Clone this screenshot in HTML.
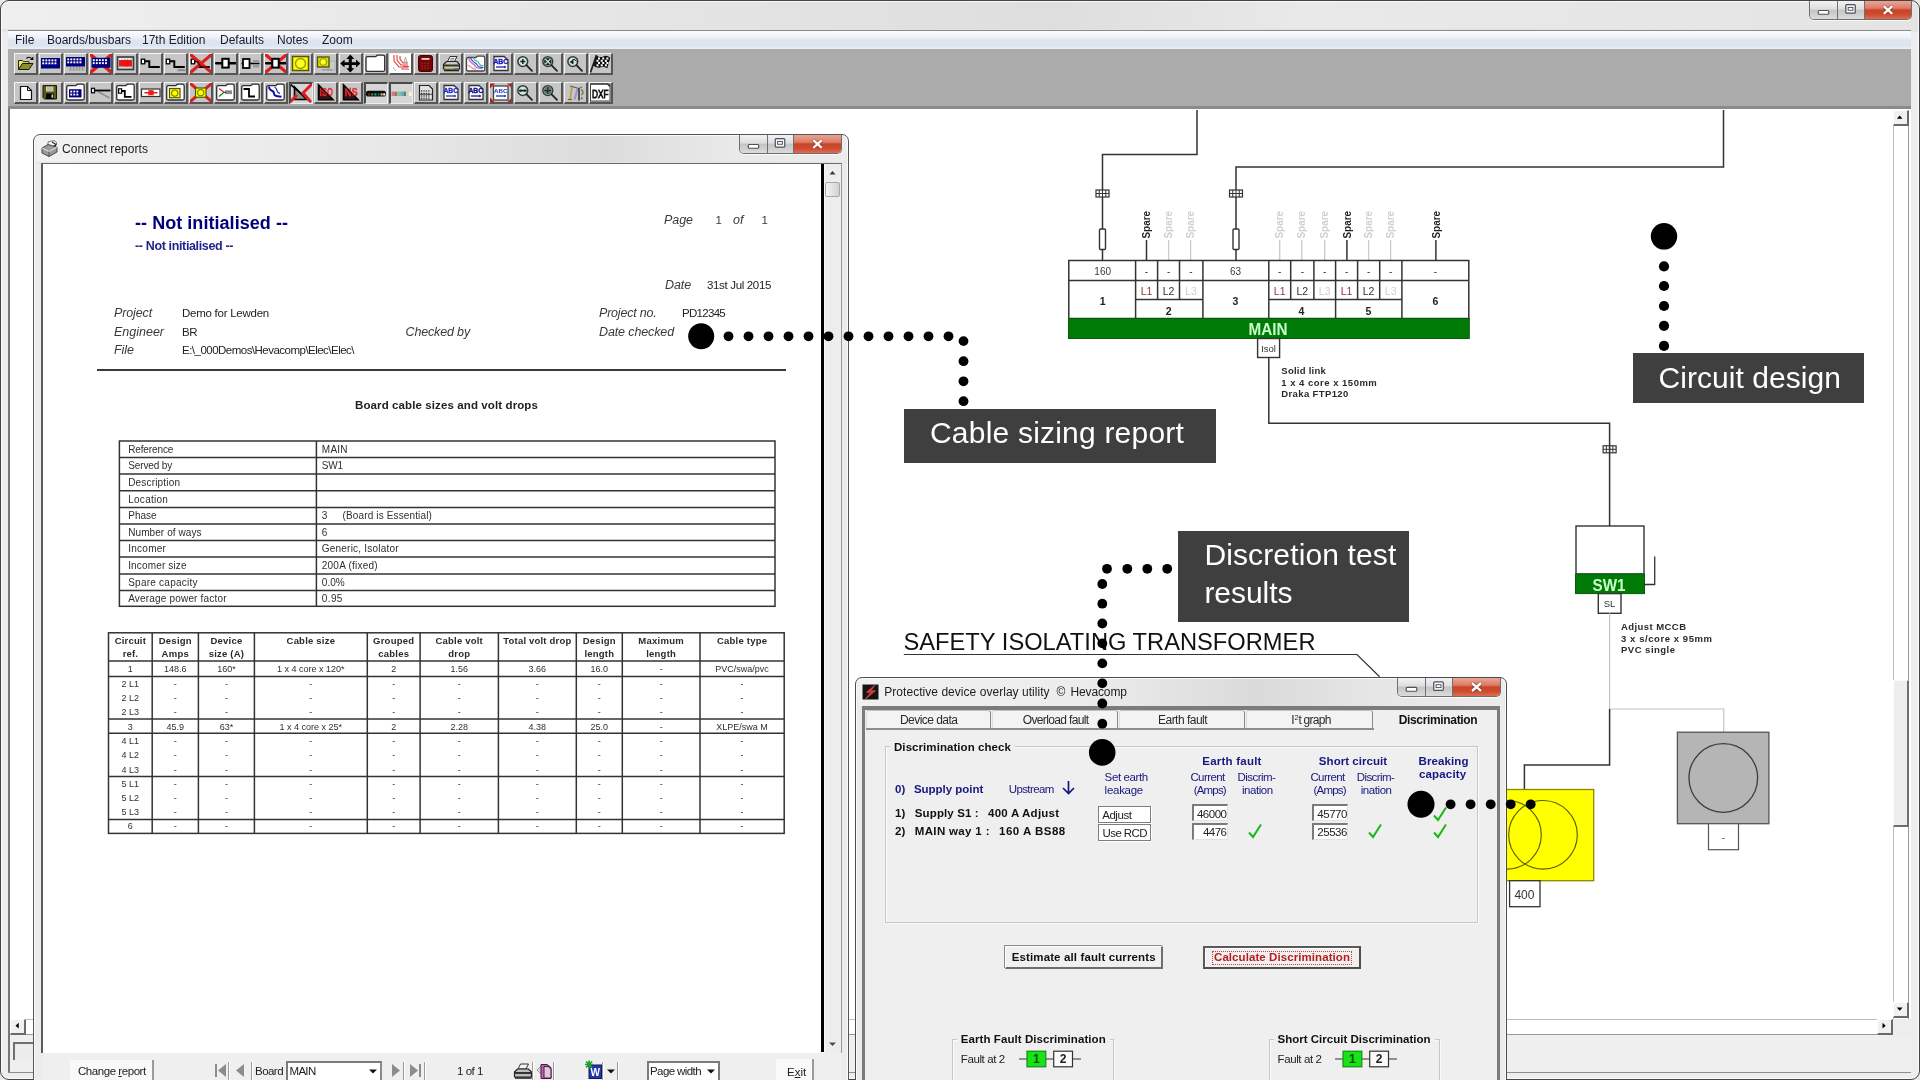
<!DOCTYPE html>
<html>
<head>
<meta charset="utf-8">
<title>Connect</title>
<style>
*{box-sizing:border-box;margin:0;padding:0}
html,body{width:1920px;height:1080px;overflow:hidden;background:#fff;font-family:"Liberation Sans",sans-serif;}
#root{position:absolute;left:0;top:0;width:1920px;height:1080px;overflow:hidden;background:#e9e9e9;will-change:transform;}
.abs{position:absolute}
.t{position:absolute;white-space:nowrap;line-height:1}
/* ===== outer frame ===== */
#frame{position:absolute;left:0;top:0;width:1920px;height:1080px;border-radius:9px 9px 9px 9px;background:linear-gradient(180deg,#ececec 0,#e2e2e2 30px,#ededed 31px,#ededed 100%);border:1px solid #444;box-shadow:inset 0 0 0 1px #fafafa;}
#titlegrad{position:absolute;left:2px;top:2px;width:1916px;height:27px;background:linear-gradient(90deg,#efefef 0,#e6e6e6 30%,#dedede 55%,#e9e9e9 68%,#e4e4e4 100%);border-radius:7px 7px 0 0}
#menubar{position:absolute;left:8px;top:30px;width:1903px;height:19px;background:linear-gradient(180deg,#fbfcfe 0,#eef1f8 35%,#dfe4f1 55%,#dde2ef 80%,#eceff6 100%);border-top:1px solid #8a8a8a}
#menubar span{position:absolute;top:2px;font-size:12px;color:#1b1b2b;white-space:nowrap;line-height:14px}
#toolbar{position:absolute;left:8px;top:49px;width:1903px;height:60px;background:#ababab;border-bottom:3px solid #8b8b8b}
.tb{position:absolute;width:24px;height:22px;background:#c6c6c6;border-top:1px solid #f4f4f4;border-left:1px solid #f4f4f4;border-right:2px solid #555;border-bottom:2px solid #555;overflow:hidden}
.tb svg{position:absolute;left:-1px;top:-1px;width:24px;height:22px}
.tbp{background:#d6d6d6;border-top:2px solid #4a4a4a;border-left:2px solid #4a4a4a;border-right:1px solid #eee;border-bottom:1px solid #eee}
.tbp svg{left:-2px;top:-2px}
/* window controls */
.wc{position:absolute;height:20px;border:1px solid #6f6f6f;border-top:none;border-radius:0 0 5px 5px;overflow:hidden;box-shadow:0 1px 0 rgba(255,255,255,.75)}
.wc div{position:absolute;top:0;height:100%}
.wc .b{background:linear-gradient(180deg,#f2f2f2 0,#dedede 45%,#c4c4c4 50%,#cfcfcf 75%,#dcdcdc 100%);border-right:1px solid #6f6f6f}
.wc .c{background:linear-gradient(180deg,#e9a596 0,#de7b65 40%,#c9442a 50%,#cf4c30 75%,#dd6d52 100%)}
.wc svg{position:absolute;left:0;top:0;width:100%;height:100%}
/* classic scroll buttons */
.sbtn{position:absolute;background:#f1f1f1;border-top:1px solid #fff;border-left:1px solid #fff;border-right:2px solid #6a6a6a;border-bottom:2px solid #6a6a6a}
.sbtn svg{position:absolute;left:0;top:0;width:100%;height:100%}

#canvas{position:absolute;left:8px;top:109px;width:1903px;height:910px;background:#fff;border-left:2px solid #777}
</style>
</head>
<body>
<div id="root">
<div id="frame"></div>
<div id="titlegrad"></div>
<div class="wc" style="left:1809px;top:1px;width:103px;height:19px"><div class="b" style="left:0;width:28px"><svg viewBox="0 0 28 19"><rect x="8.5" y="10.02" width="11" height="4" rx="1" fill="#fff" stroke="#4c5260" stroke-width="1.2"/></svg></div><div class="b" style="left:28px;width:27px"><svg viewBox="0 0 27 19"><rect x="8.0" y="3.8000000000000003" width="10" height="9" rx="1" fill="#f6f6f6" stroke="#4c5260" stroke-width="1.3"/><rect x="10.5" y="6.800000000000001" width="5" height="3" fill="#fff" stroke="#4c5260" stroke-width="1"/></svg></div><div class="c" style="left:55px;width:47px"><svg viewBox="0 0 47 19"><path d="M19.4 6.3L26.6 12.7M26.6 6.3L19.4 12.7" stroke="#5a2218" stroke-width="4" stroke-linecap="round" opacity=".5"/><path d="M19.4 6.3L26.6 12.7M26.6 6.3L19.4 12.7" stroke="#fff" stroke-width="2.4" stroke-linecap="square"/></svg></div></div>
<div id="menubar">
<span style="left:7px">File</span><span style="left:39px">Boards/busbars</span><span style="left:134px">17th Edition</span><span style="left:212px">Defaults</span><span style="left:269px">Notes</span><span style="left:314px">Zoom</span>
</div>
<div id="toolbar">
<div class="tb" style="left:6px;top:4px"><svg viewBox="0 0 24 22"><path d="M4.5 16.5v-9h4l1 1.2h5.5v2.3" fill="#e9e96e" stroke="#2a2a00" stroke-width="1"/><path d="M4.5 16.5l3.8-6h10.7l-4 6z" fill="#8d8d2d" stroke="#1c1c00" stroke-width="1"/><path d="M12.5 5.5q2.6-2.6 5.2 0.2" stroke="#000" stroke-width="1.1" fill="none"/><path d="M19.3 3.4v3.6h-3.4z" fill="#000"/></svg></div>
<div class="tb" style="left:31px;top:4px"><svg viewBox="0 0 24 22"><rect x="2" y="5" width="19" height="10.5" fill="#00007f"/><rect x="3.3" y="6.4" width="1.9" height="1.9" fill="#fff"/><rect x="6.35" y="6.4" width="1.9" height="1.9" fill="#fff"/><rect x="9.399999999999999" y="6.4" width="1.9" height="1.9" fill="#fff"/><rect x="12.45" y="6.4" width="1.9" height="1.9" fill="#fff"/><rect x="15.5" y="6.4" width="1.9" height="1.9" fill="#fff"/><rect x="3.3" y="9.4" width="1.9" height="1.9" fill="#fff"/><rect x="6.35" y="9.4" width="1.9" height="1.9" fill="#fff"/><rect x="9.399999999999999" y="9.4" width="1.9" height="1.9" fill="#fff"/><rect x="12.45" y="9.4" width="1.9" height="1.9" fill="#fff"/><rect x="15.5" y="9.4" width="1.9" height="1.9" fill="#fff"/></svg></div>
<div class="tb" style="left:56px;top:4px"><svg viewBox="0 0 24 22"><rect x="2" y="4" width="19" height="9.5" fill="#00007f"/><rect x="3.3" y="5.4" width="1.9" height="1.9" fill="#fff"/><rect x="6.35" y="5.4" width="1.9" height="1.9" fill="#fff"/><rect x="9.399999999999999" y="5.4" width="1.9" height="1.9" fill="#fff"/><rect x="12.45" y="5.4" width="1.9" height="1.9" fill="#fff"/><rect x="15.5" y="5.4" width="1.9" height="1.9" fill="#fff"/><rect x="3.3" y="8.4" width="1.9" height="1.9" fill="#fff"/><rect x="6.35" y="8.4" width="1.9" height="1.9" fill="#fff"/><rect x="9.399999999999999" y="8.4" width="1.9" height="1.9" fill="#fff"/><rect x="12.45" y="8.4" width="1.9" height="1.9" fill="#fff"/><rect x="15.5" y="8.4" width="1.9" height="1.9" fill="#fff"/><rect x="5" y="14" width="16" height="4" fill="#b5b5b5"/><rect x="6" y="14.2" width="1.2" height="1.2" fill="#8a8a8a"/><rect x="9" y="14.2" width="1.2" height="1.2" fill="#8a8a8a"/><rect x="12" y="14.2" width="1.2" height="1.2" fill="#8a8a8a"/><rect x="15" y="14.2" width="1.2" height="1.2" fill="#8a8a8a"/><rect x="18" y="14.2" width="1.2" height="1.2" fill="#8a8a8a"/><rect x="6" y="16.2" width="1.2" height="1.2" fill="#8a8a8a"/><rect x="9" y="16.2" width="1.2" height="1.2" fill="#8a8a8a"/><rect x="12" y="16.2" width="1.2" height="1.2" fill="#8a8a8a"/><rect x="15" y="16.2" width="1.2" height="1.2" fill="#8a8a8a"/><rect x="18" y="16.2" width="1.2" height="1.2" fill="#8a8a8a"/></svg></div>
<div class="tb" style="left:81px;top:4px"><svg viewBox="0 0 24 22"><path d="M2 2L22 19M22 2L2 19" stroke="#e21b1b" stroke-width="3.4" stroke-linecap="round" fill="none"/><rect x="2.5" y="4.8" width="19" height="10" fill="#00007f"/><rect x="3.8" y="6.199999999999999" width="1.9" height="1.9" fill="#fff"/><rect x="6.85" y="6.199999999999999" width="1.9" height="1.9" fill="#fff"/><rect x="9.899999999999999" y="6.199999999999999" width="1.9" height="1.9" fill="#fff"/><rect x="12.95" y="6.199999999999999" width="1.9" height="1.9" fill="#fff"/><rect x="16.0" y="6.199999999999999" width="1.9" height="1.9" fill="#fff"/><rect x="3.8" y="9.2" width="1.9" height="1.9" fill="#fff"/><rect x="6.85" y="9.2" width="1.9" height="1.9" fill="#fff"/><rect x="9.899999999999999" y="9.2" width="1.9" height="1.9" fill="#fff"/><rect x="12.95" y="9.2" width="1.9" height="1.9" fill="#fff"/><rect x="16.0" y="9.2" width="1.9" height="1.9" fill="#fff"/></svg></div>
<div class="tb" style="left:106px;top:4px"><svg viewBox="0 0 24 22"><rect x="3.5" y="4" width="16" height="12.5" fill="#cfcfcf" stroke="#3a3a3a" stroke-width="1.6"/><rect x="5" y="7" width="13" height="6.5" fill="#e21b1b"/><ellipse cx="12.5" cy="10" rx="4.5" ry="3.6" fill="#f01010"/><rect x="5.5" y="5.3" width="1.6" height="1.6" fill="#fff"/><rect x="8.5" y="5.3" width="1.6" height="1.6" fill="#fff"/><rect x="11.5" y="5.3" width="1.6" height="1.6" fill="#fff"/><rect x="14.5" y="5.3" width="1.6" height="1.6" fill="#fff"/><rect x="5.5" y="13.8" width="1.2" height="1.2" fill="#ddd"/><rect x="8.5" y="13.8" width="1.2" height="1.2" fill="#ddd"/><rect x="11.5" y="13.8" width="1.2" height="1.2" fill="#ddd"/><rect x="14.5" y="13.8" width="1.2" height="1.2" fill="#ddd"/></svg></div>
<div class="tb" style="left:131px;top:4px"><svg viewBox="0 0 24 22"><rect x="2.3" y="6.2" width="3.400" height="4.600" fill="#fff" stroke="#000" stroke-width="1.300"/><path d="M5.7 8.3h4.600v5.700h10.500" stroke="#000" stroke-width="1.900" fill="none" stroke-linejoin="miter"/></svg></div>
<div class="tb" style="left:156px;top:4px"><svg viewBox="0 0 24 22"><rect x="2.3" y="6.2" width="3.400" height="4.600" fill="#fff" stroke="#000" stroke-width="1.300"/><path d="M5.7 8.3h4.600v5.700h10.500" stroke="#000" stroke-width="1.900" fill="none" stroke-linejoin="miter"/><rect x="13.5" y="16" width="8" height="2.2" fill="#8e8e8e"/></svg></div>
<div class="tb" style="left:181px;top:4px"><svg viewBox="0 0 24 22"><rect x="2.3" y="6.2" width="3.400" height="4.600" fill="#fff" stroke="#000" stroke-width="1.300"/><path d="M5.7 8.3h4.600v5.700h10.500" stroke="#000" stroke-width="1.900" fill="none" stroke-linejoin="miter"/><path d="M2 2L22 19M22 2L2 19" stroke="#e21b1b" stroke-width="3.2" stroke-linecap="round" fill="none"/><path d="M8 8.5l4 5.5h8" stroke="#300" stroke-width="1.6" fill="none" opacity=".8"/></svg></div>
<div class="tb" style="left:206px;top:4px"><svg viewBox="0 0 24 22"><path d="M2 10.200h19.500" stroke="#000" stroke-width="2.400" stroke-linecap="round"/><rect x="8.300" y="5.800" width="6.400" height="8.800" fill="#fff" stroke="#000" stroke-width="2"/></svg></div>
<div class="tb" style="left:231px;top:4px"><svg viewBox="0 0 24 22"><path d="M2.5 10.5h18" stroke="#000" stroke-width="1.6"/><rect x="14" y="7" width="6" height="3" fill="#999"/><rect x="14" y="11.5" width="6" height="3" fill="#999"/><rect x="4" y="6" width="6.5" height="9" fill="#fff" stroke="#000" stroke-width="1.8"/></svg></div>
<div class="tb" style="left:256px;top:4px"><svg viewBox="0 0 24 22"><path d="M2 2L22 19M22 2L2 19" stroke="#e21b1b" stroke-width="3.2" stroke-linecap="round" fill="none"/><path d="M2 10.200h19.500" stroke="#000" stroke-width="2.400" stroke-linecap="round"/><rect x="8.300" y="5.800" width="6.400" height="8.800" fill="#fff" stroke="#000" stroke-width="2"/></svg></div>
<div class="tb" style="left:281px;top:4px"><svg viewBox="0 0 24 22"><rect x="3.5" y="3.5" width="16" height="14" fill="#ffff00" stroke="#55550a" stroke-width="1.5"/><circle cx="11.5" cy="10.5" r="5" fill="#ffff20" stroke="#9a9a10" stroke-width="1.4"/></svg></div>
<div class="tb" style="left:306px;top:4px"><svg viewBox="0 0 24 22"><rect x="14" y="8" width="7" height="9" fill="#c9c9c9" stroke="#b0b0b0"/><rect x="8" y="16" width="10" height="1.5" fill="#999"/><rect x="3.5" y="4" width="11.5" height="10" fill="#e0e000" stroke="#55550a" stroke-width="1.4"/><circle cx="9.2" cy="9" r="3.4" fill="#ffff20" stroke="#8a8a10" stroke-width="1"/></svg></div>
<div class="tb" style="left:331px;top:4px"><svg viewBox="0 0 24 22"><path d="M11.300 1.600l4 4.400h-2.500v3.200h4.200v-2.600l4.400 4-4.400 4v-2.600h-4.200v3.200h2.500l-4 4.400-4-4.400h2.500v-3.200h-4.200v2.600l-4.400-4 4.400-4v2.600h4.200v-3.200h-2.500z" fill="#000"/></svg></div>
<div class="tb" style="left:356px;top:4px"><svg viewBox="0 0 24 22"><path d="M2 5.2Q2 3.7 3.5 3.7H11.724L13.224 2.2H18.9Q20.7 2.2 20.7 4.0V16.8Q20.7 18.3 19.2 18.3H3.5Q2 18.3 2 16.8Z" fill="#fff" stroke="#2e2e2e" stroke-width="1.300"/></svg></div>
<div class="tb" style="left:381px;top:4px"><svg viewBox="0 0 24 22"><rect x="1" y="1" width="21" height="19" fill="#fff"/><path d="M5 2v6l5 6h9M8 2v5l4 5h7M11 3v3l3 4h5M14 13.5h6M12 16h8" stroke="#e03a3a" stroke-width="1.1" fill="none"/><path d="M16.5 4l-1.5 5h3z" fill="#fff" stroke="#999" stroke-width=".8"/><path d="M4 14l3 4" stroke="#bbb" stroke-width="1"/></svg></div>
<div class="tb" style="left:406px;top:4px"><svg viewBox="0 0 24 22"><rect x="4.500" y="2.500" width="14" height="16" rx="2" fill="#720606" stroke="#450000" stroke-width="1"/><rect x="7.500" y="5" width="8" height="1.800" fill="#f2cccc"/><rect x="7.5" y="9.5" width="1.5" height="1.5" fill="#a02020"/><rect x="10.3" y="9.5" width="1.5" height="1.5" fill="#a02020"/><rect x="13.100000000000001" y="9.5" width="1.5" height="1.5" fill="#a02020"/><rect x="7.5" y="12" width="1.5" height="1.5" fill="#a02020"/><rect x="10.3" y="12" width="1.5" height="1.5" fill="#a02020"/><rect x="13.100000000000001" y="12" width="1.5" height="1.5" fill="#a02020"/><rect x="7.5" y="14.5" width="1.5" height="1.5" fill="#a02020"/><rect x="10.3" y="14.5" width="1.5" height="1.5" fill="#a02020"/><rect x="13.100000000000001" y="14.5" width="1.5" height="1.5" fill="#a02020"/></svg></div>
<div class="tb" style="left:431px;top:4px"><svg viewBox="0 0 24 22"><path d="M8.5 8.5l2.5-5h7l-2.5 5z" fill="#eee" stroke="#333" stroke-width="1"/><path d="M11.5 5.5h4M11 7h4" stroke="#666" stroke-width=".7"/><path d="M4.5 11.5l3-3h10.5l2.5 3v4.5h-16z" fill="#c8c8c8" stroke="#222" stroke-width="1.2"/><rect x="4.5" y="11.5" width="16" height="2" fill="#333"/><rect x="6" y="14.2" width="9" height="1.4" fill="#d8d84a"/><path d="M5 17.5h15" stroke="#222" stroke-width="1.6"/></svg></div>
<div class="tb" style="left:456px;top:4px"><svg viewBox="0 0 24 22"><path d="M2.5 6q0-1.5 1.5-1.5h8l1.4-1.4h5.6q1.8 0 1.8 1.8v11.6q0 1.5-1.5 1.5h-15.3q-1.5 0-1.5-1.5z" fill="#fff" stroke="#444" stroke-width="1.3"/><path d="M4.5 5.5q2 4 4 5t3 3 7 2" stroke="#d070c0" stroke-width="1.6" fill="none"/><path d="M6.5 5q2 3.5 4 4.5t3 3 6 2" stroke="#3050d0" stroke-width="1.1" fill="none"/><path d="M9 4.5q1.5 3 3.5 3.5t3 3 4 1.5" stroke="#50c0a0" stroke-width="1.3" fill="none"/><path d="M4 12q3 3 8 4.500" stroke="#f0a0a0" stroke-width="1.6" fill="none"/></svg></div>
<div class="tb" style="left:481px;top:4px"><svg viewBox="0 0 24 22"><path d="M5 3.5h10l4 3.5v10.5h-14z" fill="#fff" stroke="#333" stroke-width="1.3"/><text x="11.8" y="11.4" font-family="Liberation Sans" font-weight="bold" font-size="6.8" text-anchor="middle" fill="#1a1ab4" stroke="#1a1ab4" stroke-width=".35">ABC</text><path d="M7 14h9.5" stroke="#1a1ab4" stroke-width="1.3"/><path d="M15.3 12.6l2 1.4-2 1.4z" fill="#1a1ab4"/></svg></div>
<div class="tb" style="left:506px;top:4px"><svg viewBox="0 0 24 22"><circle cx="8.800" cy="8.600" r="4.900" fill="#d5e6e1" stroke="#2c3f3d" stroke-width="1.500"/><path d="M12.400 12.200l5.600 5.600" stroke="#262626" stroke-width="1.900" stroke-linecap="round"/><path d="M6.300 8.600h5M8.800 6.100v5" stroke="#102020" stroke-width="1.5"/></svg></div>
<div class="tb" style="left:531px;top:4px"><svg viewBox="0 0 24 22"><circle cx="8.800" cy="8.600" r="4.900" fill="#d5e6e1" stroke="#2c3f3d" stroke-width="1.500"/><path d="M12.400 12.200l5.600 5.600" stroke="#262626" stroke-width="1.900" stroke-linecap="round"/><circle cx="8.800" cy="8.600" r="3.700" fill="#1c2c2c"/><path d="M6.300 6.100l5 5M11.300 6.100l-5 5" stroke="#d5e6e1" stroke-width="1.300"/></svg></div>
<div class="tb" style="left:556px;top:4px"><svg viewBox="0 0 24 22"><circle cx="8.800" cy="8.600" r="4.900" fill="#d5e6e1" stroke="#2c3f3d" stroke-width="1.500"/><path d="M12.400 12.200l5.600 5.600" stroke="#262626" stroke-width="1.900" stroke-linecap="round"/><path d="M5.500 9l4-2.500v5z" fill="#102020"/><path d="M8.500 6.600q3-1 4 2" stroke="#102020" stroke-width="1" fill="none"/></svg></div>
<div class="tb" style="left:581px;top:4px"><svg viewBox="0 0 24 22"><path d="M1.500 19.500l6-17.500" stroke="#222" stroke-width="1.700"/><path d="M7.300 2.200q3.500 3 7 1.200t7 1.400l-3 10.500q-3.500-2.400-6.500-1t-7.500-1.500z" fill="#111"/><rect x="9" y="4.5" width="2" height="2" fill="#fff"/><rect x="13.2" y="4.5" width="2" height="2" fill="#fff"/><rect x="17.4" y="4.5" width="2" height="2" fill="#fff"/><rect x="9" y="9" width="2" height="2" fill="#fff"/><rect x="13.2" y="9" width="2" height="2" fill="#fff"/><rect x="17.4" y="9" width="2" height="2" fill="#fff"/><rect x="7.5" y="6.8" width="2" height="2" fill="#fff"/><rect x="11.7" y="6.8" width="2" height="2" fill="#fff"/><rect x="15.899999999999999" y="6.8" width="2" height="2" fill="#fff"/><rect x="7.5" y="11.3" width="2" height="2" fill="#fff"/><rect x="11.7" y="11.3" width="2" height="2" fill="#fff"/><rect x="15.899999999999999" y="11.3" width="2" height="2" fill="#fff"/></svg></div>
<div class="tb" style="left:6px;top:33px"><svg viewBox="0 0 24 22"><path d="M6.500 4.500h7l4 4v9h-11z" fill="#fff" stroke="#111" stroke-width="1.2"/><path d="M13.500 4.500v4h4" fill="none" stroke="#111" stroke-width="1"/></svg></div>
<div class="tb" style="left:31px;top:33px"><svg viewBox="0 0 24 22"><path d="M4 3.500h13.500v13.500h-12l-1.500-1.500z" fill="#5a5a14" stroke="#1a1a00" stroke-width="1"/><rect x="7" y="4.500" width="7.500" height="5" fill="#d2d2c2"/><path d="M8 6h5.500M8 7.800h5.500" stroke="#999" stroke-width=".7"/><rect x="7" y="11.500" width="8" height="5.500" fill="#050505"/><rect x="12.500" y="12.500" width="1.800" height="3.300" fill="#c8c8b8"/></svg></div>
<div class="tb" style="left:56px;top:33px"><svg viewBox="0 0 24 22"><path d="M2.7 5.2Q2.7 3.7 4.2 3.7H11.8L13.3 2.2H18.4Q20.2 2.2 20.2 4.0V16.5Q20.2 18 18.7 18H4.2Q2.7 18 2.7 16.5Z" fill="#fff" stroke="#2e2e2e" stroke-width="1.300"/><rect x="5" y="7.2" width="12.5" height="8.2" fill="#00007f"/><rect x="6.3" y="8.6" width="1.9" height="1.9" fill="#fff"/><rect x="9.35" y="8.6" width="1.9" height="1.9" fill="#fff"/><rect x="12.399999999999999" y="8.6" width="1.9" height="1.9" fill="#fff"/><rect x="6.3" y="11.600000000000001" width="1.9" height="1.9" fill="#fff"/><rect x="9.35" y="11.600000000000001" width="1.9" height="1.9" fill="#fff"/><rect x="12.399999999999999" y="11.600000000000001" width="1.9" height="1.9" fill="#fff"/></svg></div>
<div class="tb" style="left:81px;top:33px"><svg viewBox="0 0 24 22"><path d="M9 9.500l11.500 6.500" stroke="#909090" stroke-width="1.8"/><path d="M5.500 8.500h16" stroke="#000" stroke-width="1.8"/><rect x="2.500" y="6.300" width="3" height="4.500" fill="#fff" stroke="#000" stroke-width="1.200"/></svg></div>
<div class="tb" style="left:106px;top:33px"><svg viewBox="0 0 24 22"><path d="M2.7 5.2Q2.7 3.7 4.2 3.7H11.8L13.3 2.2H18.4Q20.2 2.2 20.2 4.0V16.5Q20.2 18 18.7 18H4.2Q2.7 18 2.7 16.5Z" fill="#fff" stroke="#2e2e2e" stroke-width="1.300"/><rect x="4.600" y="6.800" width="3" height="4.400" fill="#fff" stroke="#000" stroke-width="1.200"/><path d="M7.600 9h3.200v5.800h6.700" stroke="#000" stroke-width="1.800" fill="none"/></svg></div>
<div class="tb" style="left:131px;top:33px"><svg viewBox="0 0 24 22"><rect x="2.500" y="7" width="18.500" height="7.500" fill="#fff" stroke="#333" stroke-width="1.200"/><path d="M5.500 10.700h5M13.500 10.700h5" stroke="#e21b1b" stroke-width="1.600"/><path d="M9.500 7.500l3 3.200-3 3.200zM14.500 7.500l-3 3.200 3 3.200z" fill="#e21b1b"/><circle cx="12" cy="10.700" r="2.600" fill="#f01818"/></svg></div>
<div class="tb" style="left:156px;top:33px"><svg viewBox="0 0 24 22"><path d="M2.7 5.2Q2.7 3.7 4.2 3.7H11.8L13.3 2.2H18.4Q20.2 2.2 20.2 4.0V16.5Q20.2 18 18.7 18H4.2Q2.7 18 2.7 16.5Z" fill="#fff" stroke="#2e2e2e" stroke-width="1.300"/><rect x="5.5" y="6.5" width="10.5" height="9.24" fill="#ffff00" stroke="#55550a" stroke-width="1.2"/><circle cx="10.75" cy="11.120000000000001" r="3.15" fill="#ffff00" stroke="#77770a" stroke-width="1.1"/></svg></div>
<div class="tb" style="left:181px;top:33px"><svg viewBox="0 0 24 22"><path d="M2 2L22 19M22 2L2 19" stroke="#e21b1b" stroke-width="3" stroke-linecap="round" fill="none"/><rect x="6.5" y="6" width="10.5" height="9.24" fill="#ffff00" stroke="#55550a" stroke-width="1.2"/><circle cx="11.75" cy="10.620000000000001" r="3.15" fill="#ffff00" stroke="#77770a" stroke-width="1.1"/></svg></div>
<div class="tb" style="left:206px;top:33px"><svg viewBox="0 0 24 22"><path d="M2.7 5.2Q2.7 3.7 4.2 3.7H11.8L13.3 2.2H18.4Q20.2 2.2 20.2 4.0V16.5Q20.2 18 18.7 18H4.2Q2.7 18 2.7 16.5Z" fill="#fff" stroke="#2e2e2e" stroke-width="1.300"/><rect x="11" y="8.300" width="7" height="3.800" fill="#8a8a8a"/><path d="M5 6.500l5 3.800" stroke="#d03030" stroke-width="1.300"/><path d="M5 14.500l5-4.200h2" stroke="#207020" stroke-width="1.300" fill="none"/></svg></div>
<div class="tb" style="left:231px;top:33px"><svg viewBox="0 0 24 22"><path d="M2.7 5.2Q2.7 3.7 4.2 3.7H11.8L13.3 2.2H18.4Q20.2 2.2 20.2 4.0V16.5Q20.2 18 18.7 18H4.2Q2.7 18 2.7 16.5Z" fill="#fff" stroke="#2e2e2e" stroke-width="1.300"/><path d="M4.500 7h5.500v7.500h6" stroke="#000" stroke-width="1.800" fill="none"/></svg></div>
<div class="tb" style="left:256px;top:33px"><svg viewBox="0 0 24 22"><path d="M2.7 5.2Q2.7 3.7 4.2 3.7H11.8L13.3 2.2H18.4Q20.2 2.2 20.2 4.0V16.5Q20.2 18 18.7 18H4.2Q2.7 18 2.7 16.5Z" fill="#fff" stroke="#2e2e2e" stroke-width="1.300"/><path d="M5 4.500q0 3 2.500 4t2.500 3 2.500 2.500 5 .8" stroke="#1010a8" stroke-width="1.900" fill="none"/><path d="M10.500 5q2 1 2.500 3.500t3 3" stroke="#3a3ac8" stroke-width="1.300" fill="none"/></svg></div>
<div class="tb tbp" style="left:281px;top:33px"><svg viewBox="0 0 24 22"><path d="M5.500 5v12.500h12z" fill="#8f8f8f" stroke="#000" stroke-width="1.600"/><path d="M1 2l21 18" stroke="#000" stroke-width="1.600"/><path d="M22 3l-8 8 7 8M2 19l5-5" stroke="#e21b1b" stroke-width="3" fill="none" stroke-linecap="round"/></svg></div>
<div class="tb" style="left:306px;top:33px"><svg viewBox="0 0 24 22"><path d="M4.500 3v14.700h14.500z" fill="#3a1010" stroke="#000" stroke-width="1.600" stroke-linejoin="miter"/><text x="12.300" y="13.600" font-family="Liberation Sans" font-weight="bold" font-size="11.500" text-anchor="middle" fill="#ee2a30" stroke="#ee2a30" stroke-width=".3" textLength="13" lengthAdjust="spacingAndGlyphs">ISO</text><path d="M4.500 3L19 17.700" stroke="#000" stroke-width="1.400" opacity=".55"/></svg></div>
<div class="tb" style="left:331px;top:33px"><svg viewBox="0 0 24 22"><path d="M4.500 3v14.700h14.500z" fill="#3a1010" stroke="#000" stroke-width="1.600" stroke-linejoin="miter"/><text x="12.300" y="13.600" font-family="Liberation Sans" font-weight="bold" font-size="11.500" text-anchor="middle" fill="#ee2a30" stroke="#ee2a30" stroke-width=".3" textLength="13" lengthAdjust="spacingAndGlyphs">NS</text><path d="M4.500 3L19 17.700" stroke="#000" stroke-width="1.400" opacity=".55"/></svg></div>
<div class="tb tbp" style="left:356px;top:33px"><svg viewBox="0 0 24 22"><rect x="2" y="8.700" width="20" height="5.900" rx="2.200" fill="#0a0a0a"/><rect x="4" y="11.300" width="2" height="2.200" fill="#a01818"/><rect x="7.2" y="11.300" width="2" height="2.200" fill="#20a040"/><rect x="10.4" y="11.300" width="2" height="2.200" fill="#30b060"/><rect x="13.6" y="11.300" width="2" height="2.200" fill="#2050c0"/><rect x="16.6" y="11.300" width="2" height="2.200" fill="#d8d840"/><rect x="19.2" y="11.300" width="2" height="2.200" fill="#f4f4f4"/></svg></div>
<div class="tb tbp" style="left:381px;top:33px"><svg viewBox="0 0 24 22"><rect x="2.5" y="9.600" width="2.800" height="4.400" fill="#c88080"/><rect x="5.3" y="9.600" width="2.800" height="4.400" fill="#c86060"/><rect x="8.3" y="9.600" width="2.800" height="4.400" fill="#70c8a0"/><rect x="11.3" y="9.600" width="2.800" height="4.400" fill="#60b8a0"/><rect x="14.3" y="9.600" width="2.800" height="4.400" fill="#5080b8"/><rect x="17.3" y="9.600" width="2.800" height="4.400" fill="#d8d890"/><rect x="19.8" y="9.600" width="2.800" height="4.400" fill="#f2f2f2"/></svg></div>
<div class="tb" style="left:406px;top:33px"><svg viewBox="0 0 24 22"><path d="M5.500 3.500h9.500l3.500 3.500v11h-13z" fill="#e4e4e4" stroke="#222" stroke-width="1.200"/><rect x="7" y="8.3" width="1.3" height="1.3" fill="#333"/><rect x="9.4" y="8.3" width="1.3" height="1.3" fill="#333"/><rect x="11.8" y="8.3" width="1.3" height="1.3" fill="#333"/><rect x="14.200000000000001" y="8.3" width="1.3" height="1.3" fill="#333"/><rect x="7" y="10.8" width="1.3" height="1.3" fill="#333"/><rect x="9.4" y="10.8" width="1.3" height="1.3" fill="#333"/><rect x="11.8" y="10.8" width="1.3" height="1.3" fill="#333"/><rect x="14.200000000000001" y="10.8" width="1.3" height="1.3" fill="#333"/><rect x="7" y="13.3" width="1.3" height="1.3" fill="#333"/><rect x="9.4" y="13.3" width="1.3" height="1.3" fill="#333"/><rect x="11.8" y="13.3" width="1.3" height="1.3" fill="#333"/><rect x="14.200000000000001" y="13.3" width="1.3" height="1.3" fill="#333"/><rect x="7" y="15.6" width="1.3" height="1.3" fill="#333"/><rect x="9.4" y="15.6" width="1.3" height="1.3" fill="#333"/><rect x="11.8" y="15.6" width="1.3" height="1.3" fill="#333"/><rect x="14.200000000000001" y="15.6" width="1.3" height="1.3" fill="#333"/><path d="M6 12.300h12" stroke="#222" stroke-width=".8"/></svg></div>
<div class="tb" style="left:431px;top:33px"><svg viewBox="0 0 24 22"><path d="M5 3.5h10l4 3.5v10.5h-14z" fill="#fff" stroke="#333" stroke-width="1.3"/><text x="11.8" y="11.4" font-family="Liberation Sans" font-weight="bold" font-size="6.8" text-anchor="middle" fill="#2030c0" stroke="#2030c0" stroke-width=".35">ABC</text><path d="M7 14h9.5" stroke="#2030c0" stroke-width="1.3"/><path d="M15.3 12.6l2 1.4-2 1.4z" fill="#2030c0"/></svg></div>
<div class="tb" style="left:456px;top:33px"><svg viewBox="0 0 24 22"><path d="M5 3.5h10l4 3.5v10.5h-14z" fill="#fff" stroke="#333" stroke-width="1.3"/><text x="11.8" y="11.4" font-family="Liberation Sans" font-weight="bold" font-size="6.8" text-anchor="middle" fill="#10108a" stroke="#10108a" stroke-width=".35">ABC</text><path d="M7 14h9.5" stroke="#10108a" stroke-width="1.3"/><path d="M15.3 12.6l2 1.4-2 1.4z" fill="#10108a"/></svg></div>
<div class="tb" style="left:481px;top:33px"><svg viewBox="0 0 24 22"><path d="M1 1.500h5l-5 5zM23 1.500h-5l5 5zM1 20.500h5l-5-5zM23 20.500h-5l5-5z" fill="#c81818"/><rect x="4.500" y="4" width="14.500" height="14" fill="#fff" stroke="#444" stroke-width="1.300"/><text x="11.800" y="11.200" font-family="Liberation Sans" font-weight="bold" font-size="6.200" text-anchor="middle" fill="#2030c0">ABC</text><path d="M7 14h9.500" stroke="#2030c0" stroke-width="1.300"/><path d="M15.300 12.600l2 1.400-2 1.400z" fill="#2030c0"/></svg></div>
<div class="tb" style="left:506px;top:33px"><svg viewBox="0 0 24 22"><circle cx="8.800" cy="8.600" r="4.900" fill="#d5e6e1" stroke="#2c3f3d" stroke-width="1.500"/><path d="M12.400 12.200l5.600 5.600" stroke="#262626" stroke-width="1.900" stroke-linecap="round"/><path d="M5 8.600h7.600" stroke="#102020" stroke-width="1.600"/><circle cx="6.800" cy="8.600" r="1.200" fill="#102020"/><circle cx="10.800" cy="8.600" r="1.200" fill="#102020"/></svg></div>
<div class="tb" style="left:531px;top:33px"><svg viewBox="0 0 24 22"><circle cx="8.800" cy="8.600" r="4.900" fill="#d5e6e1" stroke="#2c3f3d" stroke-width="1.500"/><path d="M12.400 12.200l5.600 5.600" stroke="#262626" stroke-width="1.900" stroke-linecap="round"/><circle cx="8.800" cy="8.600" r="3.800" fill="#6b7674"/><path d="M5.300 8.600h7M8.800 5.100v7" stroke="#1a2a2a" stroke-width="1.200"/></svg></div>
<div class="tb" style="left:556px;top:33px"><svg viewBox="0 0 24 22"><path d="M6 4l9 2.500 3-1.500" stroke="#555" stroke-width="1" fill="none"/><path d="M8 5l-2 12.500" stroke="#b8a040" stroke-width="1.600"/><path d="M13.500 7l-3 10.500" stroke="#a090d8" stroke-width="2.200"/><path d="M15 6.500v12" stroke="#333" stroke-width="1.600"/><path d="M17 8q2 0 2 3l-1.500 2" stroke="#7a7a50" stroke-width="1.400" fill="none"/><rect x="17" y="15.500" width="1.600" height="1.600" fill="#555"/><path d="M4 17.500h4" stroke="#806020" stroke-width="1.200"/></svg></div>
<div class="tb" style="left:581px;top:33px"><svg viewBox="0 0 24 22"><rect x="1.500" y="2" width="19.500" height="17" fill="#fff" stroke="#444" stroke-width="1"/><path d="M1.500 2h17l2.500 2.500" fill="none" stroke="#222" stroke-width="1.200"/><text x="11.300" y="16" font-family="Liberation Sans" font-size="10" text-anchor="middle" fill="#fff" stroke="#111" stroke-width=".9" textLength="16.500" lengthAdjust="spacingAndGlyphs">DXF</text></svg></div>
</div>
<div id="canvas"></div>
<!-- main vertical scrollbar -->
<div class="abs" style="left:1893px;top:110px;width:16px;height:909px;background:#fff;border-left:1px solid #bdbdbd;border-right:1px solid #9a9a9a"></div>
<div class="sbtn" style="left:1893px;top:110px;width:16px;height:16px"><svg viewBox="0 0 16 16"><path d="M3.500 9.500l3.500-4 3.500 4z" fill="#000"/></svg></div>
<div class="abs" style="left:1893px;top:680px;width:16px;height:147px;background:#eeeeee;border-right:2px solid #6f6f6f;border-bottom:2px solid #6f6f6f;border-left:1px solid #fafafa;border-top:1px solid #fafafa"></div>
<div class="sbtn" style="left:1893px;top:1002px;width:16px;height:16px"><svg viewBox="0 0 16 16"><path d="M3.500 5.500l3.500 4 3.500-4z" fill="#000"/></svg></div>
<!-- main horizontal scrollbar -->
<div class="abs" style="left:10px;top:1019px;width:1883px;height:16px;background:#fff;border-top:1px solid #bdbdbd;border-bottom:1px solid #9a9a9a"></div>
<div class="sbtn" style="left:10px;top:1019px;width:16px;height:16px"><svg viewBox="0 0 16 16"><path d="M9.500 3.500l-4 3.500 4 3.500z" fill="#000"/></svg></div>
<div class="sbtn" style="left:1877px;top:1019px;width:16px;height:16px"><svg viewBox="0 0 16 16"><path d="M5.500 3.500l4 3.500-4 3.500z" fill="#000"/></svg></div>
<!-- status area below -->
<div class="abs" style="left:8px;top:1019px;width:2px;height:54px;background:#777"></div>
<div class="abs" style="left:10px;top:1035px;width:1901px;height:37px;background:#efefef"></div>
<div class="abs" style="left:8px;top:1071.500px;width:1903px;height:1.500px;background:#8c8c8c"></div>
<div class="abs" style="left:13px;top:1042px;width:21px;height:18px;border-top:2px solid #6f6f6f;border-left:2px solid #6f6f6f;background:#ececec"></div>

<svg class="abs" style="left:0;top:0" width="1920" height="1080" viewBox="0 0 1920 1080" font-family="Liberation Sans, sans-serif">
<g fill="none" stroke="#333" stroke-width="1.5">
<path d="M1197 110V154.500H1102.500V260.500"/>
<path d="M1723.500 110V167H1236V260.500"/>
<path d="M1146.5 240V260.500"/>
<path d="M1346.9 240V260.500"/>
<path d="M1435.9 240V260.500"/>
</g>
<g fill="none" stroke="#c9c9c9" stroke-width="1.300">
<path d="M1168.6 240V260.500"/>
<path d="M1190.6 240V260.500"/>
<path d="M1279.7 240V260.500"/>
<path d="M1301.8 240V260.500"/>
<path d="M1324.7 240V260.500"/>
<path d="M1368.6 240V260.500"/>
<path d="M1390.6 240V260.500"/>
</g>
<rect x="1096.0" y="190.0" width="13" height="7" fill="#fff" stroke="#333" stroke-width="1.200"/><path d="M1096.0 193.5h13M1099.25 190.0v7M1102.5 190.0v7M1105.75 190.0v7" stroke="#333" stroke-width="1" fill="none"/>
<rect x="1229.5" y="190.0" width="13" height="7" fill="#fff" stroke="#333" stroke-width="1.200"/><path d="M1229.5 193.5h13M1232.75 190.0v7M1236 190.0v7M1239.25 190.0v7" stroke="#333" stroke-width="1" fill="none"/>
<rect x="1603.1" y="445.8" width="13" height="7" fill="#fff" stroke="#333" stroke-width="1.200"/><path d="M1603.1 449.3h13M1606.35 445.8v7M1609.6 445.8v7M1612.85 445.8v7" stroke="#333" stroke-width="1" fill="none"/>
<rect x="1099.5" y="229" width="6" height="20.500" rx="1" fill="#fff" stroke="#333" stroke-width="1.400"/>
<rect x="1233" y="229" width="6" height="20.500" rx="1" fill="#fff" stroke="#333" stroke-width="1.400"/>
<text transform="translate(1150.1 238.500) rotate(-90)" font-size="10" font-weight="bold" fill="#222" textLength="27.500" lengthAdjust="spacingAndGlyphs">Spare</text>
<text transform="translate(1172.1999999999998 238.500) rotate(-90)" font-size="10" font-weight="bold" fill="#cfcfcf" textLength="27.500" lengthAdjust="spacingAndGlyphs">Spare</text>
<text transform="translate(1194.1999999999998 238.500) rotate(-90)" font-size="10" font-weight="bold" fill="#cfcfcf" textLength="27.500" lengthAdjust="spacingAndGlyphs">Spare</text>
<text transform="translate(1283.3 238.500) rotate(-90)" font-size="10" font-weight="bold" fill="#cfcfcf" textLength="27.500" lengthAdjust="spacingAndGlyphs">Spare</text>
<text transform="translate(1305.3999999999999 238.500) rotate(-90)" font-size="10" font-weight="bold" fill="#cfcfcf" textLength="27.500" lengthAdjust="spacingAndGlyphs">Spare</text>
<text transform="translate(1328.3 238.500) rotate(-90)" font-size="10" font-weight="bold" fill="#cfcfcf" textLength="27.500" lengthAdjust="spacingAndGlyphs">Spare</text>
<text transform="translate(1350.5 238.500) rotate(-90)" font-size="10" font-weight="bold" fill="#222" textLength="27.500" lengthAdjust="spacingAndGlyphs">Spare</text>
<text transform="translate(1372.1999999999998 238.500) rotate(-90)" font-size="10" font-weight="bold" fill="#cfcfcf" textLength="27.500" lengthAdjust="spacingAndGlyphs">Spare</text>
<text transform="translate(1394.1999999999998 238.500) rotate(-90)" font-size="10" font-weight="bold" fill="#cfcfcf" textLength="27.500" lengthAdjust="spacingAndGlyphs">Spare</text>
<text transform="translate(1439.5 238.500) rotate(-90)" font-size="10" font-weight="bold" fill="#222" textLength="27.500" lengthAdjust="spacingAndGlyphs">Spare</text>
<g fill="none" stroke="#333" stroke-width="1.500">
<rect x="1068.800" y="260.500" width="400" height="58" fill="#fff"/>
<path d="M1068.800 280.400H1468.800"/>
<path d="M1135.6 260.500V318.500"/>
<path d="M1202.9 260.500V318.500"/>
<path d="M1268.8 260.500V318.500"/>
<path d="M1401.9 260.500V318.500"/>
<path d="M1157.6 260.500V299.500"/>
<path d="M1179.5 260.500V299.500"/>
<path d="M1290.7 260.500V299.500"/>
<path d="M1313.9 260.500V299.500"/>
<path d="M1357.6 260.500V299.500"/>
<path d="M1379.7 260.500V299.500"/>
<path d="M1335.600 260.500V318.500"/>
<path d="M1135.600 299.500H1202.900M1268.800 299.500H1401.900"/>
</g>
<rect x="1068.500" y="318.500" width="400.800" height="20" fill="#007a06" stroke="#0a5a0a" stroke-width="1"/>
<text x="1268" y="335" font-size="16" font-weight="bold" fill="#c9ffc9" text-anchor="middle" textLength="39" lengthAdjust="spacingAndGlyphs">MAIN</text>
<text x="1102.7" y="275" font-size="10" fill="#3a3a3a" font-weight="normal" text-anchor="middle" >160</text>
<text x="1235.6" y="275" font-size="10" fill="#3a3a3a" font-weight="normal" text-anchor="middle" >63</text>
<text x="1146.5" y="274.5" font-size="10" fill="#333" font-weight="normal" text-anchor="middle" >-</text>
<text x="1168.6" y="274.5" font-size="10" fill="#333" font-weight="normal" text-anchor="middle" >-</text>
<text x="1191" y="274.5" font-size="10" fill="#333" font-weight="normal" text-anchor="middle" >-</text>
<text x="1279.7" y="274.5" font-size="10" fill="#333" font-weight="normal" text-anchor="middle" >-</text>
<text x="1302.3" y="274.5" font-size="10" fill="#333" font-weight="normal" text-anchor="middle" >-</text>
<text x="1324.7" y="274.5" font-size="10" fill="#333" font-weight="normal" text-anchor="middle" >-</text>
<text x="1346.6" y="274.5" font-size="10" fill="#333" font-weight="normal" text-anchor="middle" >-</text>
<text x="1368.6" y="274.5" font-size="10" fill="#333" font-weight="normal" text-anchor="middle" >-</text>
<text x="1390.7" y="274.5" font-size="10" fill="#333" font-weight="normal" text-anchor="middle" >-</text>
<text x="1435.4" y="274.5" font-size="10" fill="#333" font-weight="normal" text-anchor="middle" >-</text>
<text x="1146.5" y="294.6" font-size="10.5" fill="#8d3a3a" font-weight="normal" text-anchor="middle" >L1</text>
<text x="1168.6" y="294.6" font-size="10.5" fill="#333" font-weight="normal" text-anchor="middle" >L2</text>
<text x="1191" y="294.6" font-size="10.5" fill="#cfcfcf" font-weight="normal" text-anchor="middle" >L3</text>
<text x="1279.7" y="294.6" font-size="10.5" fill="#8d3a3a" font-weight="normal" text-anchor="middle" >L1</text>
<text x="1302.3" y="294.6" font-size="10.5" fill="#333" font-weight="normal" text-anchor="middle" >L2</text>
<text x="1324.7" y="294.6" font-size="10.5" fill="#cfcfcf" font-weight="normal" text-anchor="middle" >L3</text>
<text x="1346.6" y="294.6" font-size="10.5" fill="#8d3a3a" font-weight="normal" text-anchor="middle" >L1</text>
<text x="1368.6" y="294.6" font-size="10.5" fill="#333" font-weight="normal" text-anchor="middle" >L2</text>
<text x="1390.7" y="294.6" font-size="10.5" fill="#cfcfcf" font-weight="normal" text-anchor="middle" >L3</text>
<text x="1102.7" y="305" font-size="10.5" fill="#222" font-weight="bold" text-anchor="middle" >1</text>
<text x="1235.5" y="305" font-size="10.5" fill="#222" font-weight="bold" text-anchor="middle" >3</text>
<text x="1435.4" y="305" font-size="10.5" fill="#222" font-weight="bold" text-anchor="middle" >6</text>
<text x="1168.6" y="315.2" font-size="10.5" fill="#222" font-weight="bold" text-anchor="middle" >2</text>
<text x="1301.3" y="315.2" font-size="10.5" fill="#222" font-weight="bold" text-anchor="middle" >4</text>
<text x="1368.3" y="315.2" font-size="10.5" fill="#222" font-weight="bold" text-anchor="middle" >5</text>
<rect x="1257.600" y="338.500" width="22" height="19" fill="#fff" stroke="#333" stroke-width="1.400"/>
<text x="1268.6" y="352" font-size="9.5" fill="#333" font-weight="normal" text-anchor="middle" >Isol</text>
<path d="M1268.800 357.500V423.300H1609.600V526" fill="none" stroke="#333" stroke-width="1.500"/>
<text x="1281.300" y="374.0" font-size="9.500" font-weight="bold" fill="#2a2a2a" textLength="44.5" lengthAdjust="spacing">Solid link</text>
<text x="1281.300" y="385.5" font-size="9.500" font-weight="bold" fill="#2a2a2a" textLength="95.5" lengthAdjust="spacing">1 x 4 core x 150mm</text>
<text x="1281.300" y="397.0" font-size="9.500" font-weight="bold" fill="#2a2a2a" textLength="67" lengthAdjust="spacing">Draka FTP120</text>
<rect x="1576" y="526" width="68" height="48" fill="#fff" stroke="#333" stroke-width="1.400"/>
<rect x="1575.500" y="574" width="69" height="19.600" fill="#007a06" stroke="#0a5a0a" stroke-width="1"/>
<text x="1609" y="590.500" font-size="16" font-weight="bold" fill="#c9ffc9" text-anchor="middle" textLength="33" lengthAdjust="spacingAndGlyphs">SW1</text>
<path d="M1644 584.500H1654.700V556.500" fill="none" stroke="#333" stroke-width="1.300"/>
<rect x="1598.300" y="593.600" width="22.700" height="19.700" fill="#fff" stroke="#333" stroke-width="1.400"/>
<text x="1609.6" y="607.3" font-size="9.5" fill="#333" font-weight="normal" text-anchor="middle" >SL</text>
<text x="1621" y="630.0" font-size="9.500" font-weight="bold" fill="#2a2a2a" textLength="65" lengthAdjust="spacing">Adjust MCCB</text>
<text x="1621" y="641.6" font-size="9.500" font-weight="bold" fill="#2a2a2a" textLength="91" lengthAdjust="spacing">3 x s/core x 95mm</text>
<text x="1621" y="653.2" font-size="9.500" font-weight="bold" fill="#2a2a2a" textLength="54" lengthAdjust="spacing">PVC single</text>
<path d="M1609.600 613.300V709H1723.700V732" fill="none" stroke="#c4c4c4" stroke-width="1.200"/>
<path d="M1609.600 709V765H1524.400V789.500" fill="none" stroke="#333" stroke-width="1.500"/>
<rect x="1470" y="789.500" width="123.700" height="91.200" fill="#ffff00" stroke="#8a8a00" stroke-width="1.300"/>
<circle cx="1543" cy="834.800" r="34.300" fill="none" stroke="#5a5a00" stroke-width="1.100"/>
<circle cx="1507" cy="834.800" r="34.300" fill="none" stroke="#5a5a00" stroke-width="1.100"/>
<rect x="1509.600" y="880.700" width="30.400" height="26" fill="#fff" stroke="#333" stroke-width="1.300"/>
<text x="1524.4" y="899" font-size="12" fill="#333" font-weight="normal" text-anchor="middle" >400</text>
<rect x="1677.400" y="732.200" width="91.500" height="91.500" fill="#b5b5b5" stroke="#555" stroke-width="1.300"/>
<circle cx="1723.300" cy="778" r="34.300" fill="none" stroke="#3c3c3c" stroke-width="1.300"/>
<rect x="1708.500" y="823.700" width="30" height="26" fill="#fff" stroke="#555" stroke-width="1.200"/>
<text x="1723.3" y="841" font-size="10" fill="#c03030" font-weight="normal" text-anchor="middle" >-</text>
<text x="903.500" y="650.400" font-size="23.500" fill="#111" textLength="412" lengthAdjust="spacingAndGlyphs">SAFETY ISOLATING TRANSFORMER</text>
<path d="M903.800 654.500H1357L1379.600 676.700" fill="none" stroke="#333" stroke-width="1.200"/>
</svg>
<div class="abs" style="left:33px;top:134px;width:816px;height:960px;border:1px solid #565656;border-radius:7px 7px 0 0;background:linear-gradient(180deg,#f3f3f3 0,#e4e4e4 28px,#ececec 29px);box-shadow:inset 0 0 0 1px #fbfbfb"></div>
<div class="abs" style="left:36px;top:136px;width:810px;height:26px;background:linear-gradient(90deg,#f1f1f1 0,#e9e9e9 40%,#dcdcdc 70%,#e9e9e9 86%,#ececec 100%);border-radius:5px 5px 0 0"></div>
<div class="wc" style="left:739px;top:135px;width:103px;height:19px"><div class="b" style="left:0;width:28px"><svg viewBox="0 0 28 19"><rect x="8.5" y="10.02" width="11" height="4" rx="1" fill="#fff" stroke="#4c5260" stroke-width="1.2"/></svg></div><div class="b" style="left:28px;width:26px"><svg viewBox="0 0 26 19"><rect x="7.5" y="3.8000000000000003" width="10" height="9" rx="1" fill="#f6f6f6" stroke="#4c5260" stroke-width="1.3"/><rect x="10.0" y="6.800000000000001" width="5" height="3" fill="#fff" stroke="#4c5260" stroke-width="1"/></svg></div><div class="c" style="left:54px;width:48px"><svg viewBox="0 0 48 19"><path d="M19.9 6.3L27.1 12.7M27.1 6.3L19.9 12.7" stroke="#5a2218" stroke-width="4" stroke-linecap="round" opacity=".5"/><path d="M19.9 6.3L27.1 12.7M27.1 6.3L19.9 12.7" stroke="#fff" stroke-width="2.4" stroke-linecap="square"/></svg></div></div>
<svg class="abs" style="left:40px;top:139px" width="20" height="20" viewBox="0 0 20 20"><path d="M8 3l6-1.500 3 2.500-3 4-6 1z" fill="#fafafa" stroke="#555" stroke-width=".8"/><path d="M2 9l6-3.500 9 2.500v5l-8 4.500-7-3.500z" fill="#9a9a9a" stroke="#3a3a3a" stroke-width=".9"/><path d="M2 9l7 3.500 8-4.500" fill="none" stroke="#e8e8e8" stroke-width="1"/><path d="M9 12.500v5" stroke="#444" stroke-width=".8"/><path d="M12 3l4 2.500-2 2" stroke="#222" stroke-width="1.200" fill="none"/></svg>
<div class="t" style="left:62.00px;top:143px;font-size:12px;color:#1c1c1c;letter-spacing:0.042px;">Connect reports</div>
<div class="abs" style="left:41px;top:163px;width:801px;height:890px;background:#fff;border-left:2px solid #5c5c5c;border-top:1px solid #6a6a6a;border-right:1px solid #9a9a9a"></div>
<div class="abs" style="left:821px;top:164px;width:3px;height:888px;background:#000"></div>
<div class="abs" style="left:824px;top:164px;width:17px;height:889px;background:#ededed;border-left:1px solid #f7f7f7"></div>
<svg class="abs" style="left:825px;top:166px" width="15" height="14" viewBox="0 0 15 14"><path d="M4.500 8.500l3-3.500 3 3.500z" fill="#3a3a3a"/></svg>
<div class="abs" style="left:825px;top:182px;width:15px;height:15px;background:linear-gradient(90deg,#f4f4f4,#d2d2d2);border:1px solid #a8a8a8;border-radius:2px"></div>
<svg class="abs" style="left:825px;top:1038px" width="15" height="12" viewBox="0 0 15 12"><path d="M4 4.500l3.500 3.500 3.500-3.500z" fill="#4a4a4a"/></svg>
<div class="abs" style="left:43px;top:1053px;width:799px;height:30px;background:#efefef"></div>
<div class="t" style="left:135.00px;top:214px;font-size:18px;color:#00007c;font-weight:bold;letter-spacing:0.049px;">-- Not initialised --</div>
<div class="t" style="left:135.00px;top:240px;font-size:12.5px;color:#23238f;font-weight:bold;letter-spacing:-0.359px;">-- Not initialised --</div>
<div class="t" style="left:664.00px;top:214px;font-size:12.5px;color:#3a3a3a;font-style:italic;letter-spacing:-0.048px;">Page</div>
<div class="t" style="left:715.50px;top:215px;font-size:11.5px;color:#3a3a3a;">1</div>
<div class="t" style="left:733.00px;top:214px;font-size:12.5px;color:#3a3a3a;font-style:italic;">of</div>
<div class="t" style="left:761.50px;top:215px;font-size:11.5px;color:#3a3a3a;">1</div>
<div class="t" style="left:665.00px;top:279px;font-size:12.5px;color:#3a3a3a;font-style:italic;letter-spacing:-0.101px;">Date</div>
<div class="t" style="left:707.00px;top:280px;font-size:11.5px;color:#222;letter-spacing:-0.339px;">31st Jul 2015</div>
<div class="t" style="left:114.00px;top:307px;font-size:12.5px;color:#3a3a3a;font-style:italic;letter-spacing:-0.129px;">Project</div>
<div class="t" style="left:114.00px;top:326px;font-size:12.5px;color:#3a3a3a;font-style:italic;">Engineer</div>
<div class="t" style="left:114.00px;top:344px;font-size:12.5px;color:#3a3a3a;font-style:italic;letter-spacing:-0.035px;">File</div>
<div class="t" style="left:182.00px;top:308px;font-size:11.5px;color:#222;letter-spacing:-0.251px;">Demo for Lewden</div>
<div class="t" style="left:182.00px;top:327px;font-size:11.5px;color:#222;letter-spacing:-0.488px;">BR</div>
<div class="t" style="left:182.00px;top:345px;font-size:11.5px;color:#222;letter-spacing:-0.517px;">E:\_000Demos\Hevacomp\Elec\Elec\</div>
<div class="t" style="left:405.50px;top:326px;font-size:12.5px;color:#3a3a3a;font-style:italic;letter-spacing:-0.151px;">Checked by</div>
<div class="t" style="left:599.00px;top:307px;font-size:12.5px;color:#3a3a3a;font-style:italic;letter-spacing:-0.205px;">Project no.</div>
<div class="t" style="left:599.00px;top:326px;font-size:12.5px;color:#3a3a3a;font-style:italic;letter-spacing:-0.119px;">Date checked</div>
<div class="t" style="left:682.00px;top:308px;font-size:11.5px;color:#222;letter-spacing:-0.707px;">PD12345</div>
<div class="abs" style="left:97px;top:369.300px;width:689px;height:1.500px;background:#3a3a3a"></div>
<div class="t" style="left:355.00px;top:400px;font-size:11.5px;color:#222;font-weight:bold;letter-spacing:0.107px;">Board cable sizes and volt drops</div>
<svg class="abs" style="left:0;top:0" width="900" height="1080" viewBox="0 0 900 1080"><g fill="none" stroke="#333" stroke-width="1.500"><rect x="119.400" y="441" width="655.600" height="165.29999999999995"/><path d="M119.400 457.4H775"/><path d="M119.400 474H775"/><path d="M119.400 490.7H775"/><path d="M119.400 507.4H775"/><path d="M119.400 524H775"/><path d="M119.400 540.5H775"/><path d="M119.400 557H775"/><path d="M119.400 573.9H775"/><path d="M119.400 590.4H775"/><path d="M316.400 441V606.3"/><rect x="108.5" y="632.8" width="675.7" height="200.60000000000002"/><path d="M108.5 661.1H784.2"/><path d="M108.5 676.4H784.2"/><path d="M108.5 719H784.2"/><path d="M108.5 733.3H784.2"/><path d="M108.5 776.5H784.2"/><path d="M108.5 819.6H784.2"/><path d="M152.2 632.8V833.4"/><path d="M198.4 632.8V833.4"/><path d="M254.4 632.8V833.4"/><path d="M367.3 632.8V833.4"/><path d="M420.1 632.8V833.4"/><path d="M498.4 632.8V833.4"/><path d="M576.3 632.8V833.4"/><path d="M622.3 632.8V833.4"/><path d="M700 632.8V833.4"/></g></svg>
<div class="t" style="left:128.20px;top:445px;font-size:10px;color:#2e2e2e;letter-spacing:-0.126px;">Reference</div>
<div class="t" style="left:321.80px;top:445px;font-size:10px;color:#2e2e2e;letter-spacing:0.250px;">MAIN</div>
<div class="t" style="left:128.20px;top:461px;font-size:10px;color:#2e2e2e;letter-spacing:-0.114px;">Served by</div>
<div class="t" style="left:321.80px;top:461px;font-size:10px;color:#2e2e2e;letter-spacing:-0.223px;">SW1</div>
<div class="t" style="left:128.20px;top:478px;font-size:10px;color:#2e2e2e;letter-spacing:0.180px;">Description</div>
<div class="t" style="left:128.20px;top:495px;font-size:10px;color:#2e2e2e;letter-spacing:0.274px;">Location</div>
<div class="t" style="left:128.20px;top:511px;font-size:10px;color:#2e2e2e;letter-spacing:0.029px;">Phase</div>
<div class="t" style="left:321.80px;top:511px;font-size:10px;color:#2e2e2e;">3</div>
<div class="t" style="left:342.50px;top:511px;font-size:10px;color:#2e2e2e;letter-spacing:0.140px;">(Board is Essential)</div>
<div class="t" style="left:128.20px;top:528px;font-size:10px;color:#2e2e2e;letter-spacing:0.090px;">Number of ways</div>
<div class="t" style="left:321.80px;top:528px;font-size:10px;color:#2e2e2e;">6</div>
<div class="t" style="left:128.20px;top:544px;font-size:10px;color:#2e2e2e;letter-spacing:0.269px;">Incomer</div>
<div class="t" style="left:321.80px;top:544px;font-size:10px;color:#2e2e2e;letter-spacing:0.214px;">Generic, Isolator</div>
<div class="t" style="left:128.20px;top:561px;font-size:10px;color:#2e2e2e;letter-spacing:0.152px;">Incomer size</div>
<div class="t" style="left:321.80px;top:561px;font-size:10px;color:#2e2e2e;letter-spacing:0.220px;">200A (fixed)</div>
<div class="t" style="left:128.20px;top:578px;font-size:10px;color:#2e2e2e;letter-spacing:0.240px;">Spare capacity</div>
<div class="t" style="left:321.80px;top:578px;font-size:10px;color:#2e2e2e;letter-spacing:0.052px;">0.0%</div>
<div class="t" style="left:128.20px;top:594px;font-size:10px;color:#2e2e2e;letter-spacing:0.182px;">Average power factor</div>
<div class="t" style="left:321.80px;top:594px;font-size:10px;color:#2e2e2e;letter-spacing:0.385px;">0.95</div>
<div class="t" style="left:114.63px;top:636px;font-size:9.5px;color:#2a2a2a;font-weight:bold;letter-spacing:0.193px;">Circuit</div>
<div class="t" style="left:122.63px;top:649px;font-size:9.5px;color:#2a2a2a;font-weight:bold;letter-spacing:0.166px;">ref.</div>
<div class="t" style="left:158.75px;top:636px;font-size:9.5px;color:#2a2a2a;font-weight:bold;letter-spacing:0.238px;">Design</div>
<div class="t" style="left:161.51px;top:649px;font-size:9.5px;color:#2a2a2a;font-weight:bold;letter-spacing:0.297px;">Amps</div>
<div class="t" style="left:210.40px;top:636px;font-size:9.5px;color:#2a2a2a;font-weight:bold;letter-spacing:0.230px;">Device</div>
<div class="t" style="left:208.75px;top:649px;font-size:9.5px;color:#2a2a2a;font-weight:bold;letter-spacing:0.190px;">size (A)</div>
<div class="t" style="left:286.57px;top:636px;font-size:9.5px;color:#2a2a2a;font-weight:bold;letter-spacing:0.209px;">Cable size</div>
<div class="t" style="left:373.02px;top:636px;font-size:9.5px;color:#2a2a2a;font-weight:bold;letter-spacing:0.254px;">Grouped</div>
<div class="t" style="left:378.25px;top:649px;font-size:9.5px;color:#2a2a2a;font-weight:bold;letter-spacing:0.222px;">cables</div>
<div class="t" style="left:435.53px;top:636px;font-size:9.5px;color:#2a2a2a;font-weight:bold;letter-spacing:0.204px;">Cable volt</div>
<div class="t" style="left:448.22px;top:649px;font-size:9.5px;color:#2a2a2a;font-weight:bold;letter-spacing:0.237px;">drop</div>
<div class="t" style="left:503.25px;top:636px;font-size:9.5px;color:#2a2a2a;font-weight:bold;letter-spacing:0.196px;">Total volt drop</div>
<div class="t" style="left:582.75px;top:636px;font-size:9.5px;color:#2a2a2a;font-weight:bold;letter-spacing:0.238px;">Design</div>
<div class="t" style="left:584.41px;top:649px;font-size:9.5px;color:#2a2a2a;font-weight:bold;letter-spacing:0.214px;">length</div>
<div class="t" style="left:638.26px;top:636px;font-size:9.5px;color:#2a2a2a;font-weight:bold;letter-spacing:0.282px;">Maximum</div>
<div class="t" style="left:646.26px;top:649px;font-size:9.5px;color:#2a2a2a;font-weight:bold;letter-spacing:0.214px;">length</div>
<div class="t" style="left:717.00px;top:636px;font-size:9.5px;color:#2a2a2a;font-weight:bold;letter-spacing:0.216px;">Cable type</div>
<div class="t" style="left:127.85px;top:665px;font-size:9px;color:#2f2f2f;">1</div>
<div class="t" style="left:164.04px;top:665px;font-size:9px;color:#2f2f2f;">148.6</div>
<div class="t" style="left:217.14px;top:665px;font-size:9px;color:#2f2f2f;">160*</div>
<div class="t" style="left:277.08px;top:665px;font-size:9px;color:#2f2f2f;">1 x 4 core x 120*</div>
<div class="t" style="left:391.20px;top:665px;font-size:9px;color:#2f2f2f;">2</div>
<div class="t" style="left:450.49px;top:665px;font-size:9px;color:#2f2f2f;">1.56</div>
<div class="t" style="left:528.59px;top:665px;font-size:9px;color:#2f2f2f;">3.66</div>
<div class="t" style="left:590.54px;top:665px;font-size:9px;color:#2f2f2f;">16.0</div>
<div class="t" style="left:659.65px;top:665px;font-size:9px;color:#2f2f2f;">-</div>
<div class="t" style="left:715.34px;top:665px;font-size:9px;color:#2f2f2f;">PVC/swa/pvc</div>
<div class="t" style="left:121.59px;top:680px;font-size:9px;color:#2f2f2f;">2 L1</div>
<div class="t" style="left:173.80px;top:680px;font-size:9px;color:#2f2f2f;">-</div>
<div class="t" style="left:224.90px;top:680px;font-size:9px;color:#2f2f2f;">-</div>
<div class="t" style="left:309.35px;top:680px;font-size:9px;color:#2f2f2f;">-</div>
<div class="t" style="left:392.20px;top:680px;font-size:9px;color:#2f2f2f;">-</div>
<div class="t" style="left:457.75px;top:680px;font-size:9px;color:#2f2f2f;">-</div>
<div class="t" style="left:535.85px;top:680px;font-size:9px;color:#2f2f2f;">-</div>
<div class="t" style="left:597.80px;top:680px;font-size:9px;color:#2f2f2f;">-</div>
<div class="t" style="left:659.65px;top:680px;font-size:9px;color:#2f2f2f;">-</div>
<div class="t" style="left:740.60px;top:680px;font-size:9px;color:#2f2f2f;">-</div>
<div class="t" style="left:121.59px;top:694px;font-size:9px;color:#2f2f2f;">2 L2</div>
<div class="t" style="left:173.80px;top:694px;font-size:9px;color:#2f2f2f;">-</div>
<div class="t" style="left:224.90px;top:694px;font-size:9px;color:#2f2f2f;">-</div>
<div class="t" style="left:309.35px;top:694px;font-size:9px;color:#2f2f2f;">-</div>
<div class="t" style="left:392.20px;top:694px;font-size:9px;color:#2f2f2f;">-</div>
<div class="t" style="left:457.75px;top:694px;font-size:9px;color:#2f2f2f;">-</div>
<div class="t" style="left:535.85px;top:694px;font-size:9px;color:#2f2f2f;">-</div>
<div class="t" style="left:597.80px;top:694px;font-size:9px;color:#2f2f2f;">-</div>
<div class="t" style="left:659.65px;top:694px;font-size:9px;color:#2f2f2f;">-</div>
<div class="t" style="left:740.60px;top:694px;font-size:9px;color:#2f2f2f;">-</div>
<div class="t" style="left:121.59px;top:708px;font-size:9px;color:#2f2f2f;">2 L3</div>
<div class="t" style="left:173.80px;top:708px;font-size:9px;color:#2f2f2f;">-</div>
<div class="t" style="left:224.90px;top:708px;font-size:9px;color:#2f2f2f;">-</div>
<div class="t" style="left:309.35px;top:708px;font-size:9px;color:#2f2f2f;">-</div>
<div class="t" style="left:392.20px;top:708px;font-size:9px;color:#2f2f2f;">-</div>
<div class="t" style="left:457.75px;top:708px;font-size:9px;color:#2f2f2f;">-</div>
<div class="t" style="left:535.85px;top:708px;font-size:9px;color:#2f2f2f;">-</div>
<div class="t" style="left:597.80px;top:708px;font-size:9px;color:#2f2f2f;">-</div>
<div class="t" style="left:659.65px;top:708px;font-size:9px;color:#2f2f2f;">-</div>
<div class="t" style="left:740.60px;top:708px;font-size:9px;color:#2f2f2f;">-</div>
<div class="t" style="left:127.85px;top:723px;font-size:9px;color:#2f2f2f;">3</div>
<div class="t" style="left:166.54px;top:723px;font-size:9px;color:#2f2f2f;">45.9</div>
<div class="t" style="left:219.64px;top:723px;font-size:9px;color:#2f2f2f;">63*</div>
<div class="t" style="left:279.58px;top:723px;font-size:9px;color:#2f2f2f;">1 x 4 core x 25*</div>
<div class="t" style="left:391.20px;top:723px;font-size:9px;color:#2f2f2f;">2</div>
<div class="t" style="left:450.49px;top:723px;font-size:9px;color:#2f2f2f;">2.28</div>
<div class="t" style="left:528.59px;top:723px;font-size:9px;color:#2f2f2f;">4.38</div>
<div class="t" style="left:590.54px;top:723px;font-size:9px;color:#2f2f2f;">25.0</div>
<div class="t" style="left:659.65px;top:723px;font-size:9px;color:#2f2f2f;">-</div>
<div class="t" style="left:716.34px;top:723px;font-size:9px;color:#2f2f2f;">XLPE/swa M</div>
<div class="t" style="left:121.59px;top:737px;font-size:9px;color:#2f2f2f;">4 L1</div>
<div class="t" style="left:173.80px;top:737px;font-size:9px;color:#2f2f2f;">-</div>
<div class="t" style="left:224.90px;top:737px;font-size:9px;color:#2f2f2f;">-</div>
<div class="t" style="left:309.35px;top:737px;font-size:9px;color:#2f2f2f;">-</div>
<div class="t" style="left:392.20px;top:737px;font-size:9px;color:#2f2f2f;">-</div>
<div class="t" style="left:457.75px;top:737px;font-size:9px;color:#2f2f2f;">-</div>
<div class="t" style="left:535.85px;top:737px;font-size:9px;color:#2f2f2f;">-</div>
<div class="t" style="left:597.80px;top:737px;font-size:9px;color:#2f2f2f;">-</div>
<div class="t" style="left:659.65px;top:737px;font-size:9px;color:#2f2f2f;">-</div>
<div class="t" style="left:740.60px;top:737px;font-size:9px;color:#2f2f2f;">-</div>
<div class="t" style="left:121.59px;top:751px;font-size:9px;color:#2f2f2f;">4 L2</div>
<div class="t" style="left:173.80px;top:751px;font-size:9px;color:#2f2f2f;">-</div>
<div class="t" style="left:224.90px;top:751px;font-size:9px;color:#2f2f2f;">-</div>
<div class="t" style="left:309.35px;top:751px;font-size:9px;color:#2f2f2f;">-</div>
<div class="t" style="left:392.20px;top:751px;font-size:9px;color:#2f2f2f;">-</div>
<div class="t" style="left:457.75px;top:751px;font-size:9px;color:#2f2f2f;">-</div>
<div class="t" style="left:535.85px;top:751px;font-size:9px;color:#2f2f2f;">-</div>
<div class="t" style="left:597.80px;top:751px;font-size:9px;color:#2f2f2f;">-</div>
<div class="t" style="left:659.65px;top:751px;font-size:9px;color:#2f2f2f;">-</div>
<div class="t" style="left:740.60px;top:751px;font-size:9px;color:#2f2f2f;">-</div>
<div class="t" style="left:121.59px;top:766px;font-size:9px;color:#2f2f2f;">4 L3</div>
<div class="t" style="left:173.80px;top:766px;font-size:9px;color:#2f2f2f;">-</div>
<div class="t" style="left:224.90px;top:766px;font-size:9px;color:#2f2f2f;">-</div>
<div class="t" style="left:309.35px;top:766px;font-size:9px;color:#2f2f2f;">-</div>
<div class="t" style="left:392.20px;top:766px;font-size:9px;color:#2f2f2f;">-</div>
<div class="t" style="left:457.75px;top:766px;font-size:9px;color:#2f2f2f;">-</div>
<div class="t" style="left:535.85px;top:766px;font-size:9px;color:#2f2f2f;">-</div>
<div class="t" style="left:597.80px;top:766px;font-size:9px;color:#2f2f2f;">-</div>
<div class="t" style="left:659.65px;top:766px;font-size:9px;color:#2f2f2f;">-</div>
<div class="t" style="left:740.60px;top:766px;font-size:9px;color:#2f2f2f;">-</div>
<div class="t" style="left:121.59px;top:780px;font-size:9px;color:#2f2f2f;">5 L1</div>
<div class="t" style="left:173.80px;top:780px;font-size:9px;color:#2f2f2f;">-</div>
<div class="t" style="left:224.90px;top:780px;font-size:9px;color:#2f2f2f;">-</div>
<div class="t" style="left:309.35px;top:780px;font-size:9px;color:#2f2f2f;">-</div>
<div class="t" style="left:392.20px;top:780px;font-size:9px;color:#2f2f2f;">-</div>
<div class="t" style="left:457.75px;top:780px;font-size:9px;color:#2f2f2f;">-</div>
<div class="t" style="left:535.85px;top:780px;font-size:9px;color:#2f2f2f;">-</div>
<div class="t" style="left:597.80px;top:780px;font-size:9px;color:#2f2f2f;">-</div>
<div class="t" style="left:659.65px;top:780px;font-size:9px;color:#2f2f2f;">-</div>
<div class="t" style="left:740.60px;top:780px;font-size:9px;color:#2f2f2f;">-</div>
<div class="t" style="left:121.59px;top:794px;font-size:9px;color:#2f2f2f;">5 L2</div>
<div class="t" style="left:173.80px;top:794px;font-size:9px;color:#2f2f2f;">-</div>
<div class="t" style="left:224.90px;top:794px;font-size:9px;color:#2f2f2f;">-</div>
<div class="t" style="left:309.35px;top:794px;font-size:9px;color:#2f2f2f;">-</div>
<div class="t" style="left:392.20px;top:794px;font-size:9px;color:#2f2f2f;">-</div>
<div class="t" style="left:457.75px;top:794px;font-size:9px;color:#2f2f2f;">-</div>
<div class="t" style="left:535.85px;top:794px;font-size:9px;color:#2f2f2f;">-</div>
<div class="t" style="left:597.80px;top:794px;font-size:9px;color:#2f2f2f;">-</div>
<div class="t" style="left:659.65px;top:794px;font-size:9px;color:#2f2f2f;">-</div>
<div class="t" style="left:740.60px;top:794px;font-size:9px;color:#2f2f2f;">-</div>
<div class="t" style="left:121.59px;top:808px;font-size:9px;color:#2f2f2f;">5 L3</div>
<div class="t" style="left:173.80px;top:808px;font-size:9px;color:#2f2f2f;">-</div>
<div class="t" style="left:224.90px;top:808px;font-size:9px;color:#2f2f2f;">-</div>
<div class="t" style="left:309.35px;top:808px;font-size:9px;color:#2f2f2f;">-</div>
<div class="t" style="left:392.20px;top:808px;font-size:9px;color:#2f2f2f;">-</div>
<div class="t" style="left:457.75px;top:808px;font-size:9px;color:#2f2f2f;">-</div>
<div class="t" style="left:535.85px;top:808px;font-size:9px;color:#2f2f2f;">-</div>
<div class="t" style="left:597.80px;top:808px;font-size:9px;color:#2f2f2f;">-</div>
<div class="t" style="left:659.65px;top:808px;font-size:9px;color:#2f2f2f;">-</div>
<div class="t" style="left:740.60px;top:808px;font-size:9px;color:#2f2f2f;">-</div>
<div class="t" style="left:127.85px;top:822px;font-size:9px;color:#2f2f2f;">6</div>
<div class="t" style="left:173.80px;top:822px;font-size:9px;color:#2f2f2f;">-</div>
<div class="t" style="left:224.90px;top:822px;font-size:9px;color:#2f2f2f;">-</div>
<div class="t" style="left:309.35px;top:822px;font-size:9px;color:#2f2f2f;">-</div>
<div class="t" style="left:392.20px;top:822px;font-size:9px;color:#2f2f2f;">-</div>
<div class="t" style="left:457.75px;top:822px;font-size:9px;color:#2f2f2f;">-</div>
<div class="t" style="left:535.85px;top:822px;font-size:9px;color:#2f2f2f;">-</div>
<div class="t" style="left:597.80px;top:822px;font-size:9px;color:#2f2f2f;">-</div>
<div class="t" style="left:659.65px;top:822px;font-size:9px;color:#2f2f2f;">-</div>
<div class="t" style="left:740.60px;top:822px;font-size:9px;color:#2f2f2f;">-</div>
<div class="abs" style="left:70px;top:1060px;width:84px;height:24px;background:#f9f9f9;border-right:2px solid #9a9a9a"></div>
<div class="t" style="left:78.00px;top:1066px;font-size:11.5px;color:#222;letter-spacing:-0.45px;">Change <u>r</u>eport</div>
<svg class="abs" style="left:210px;top:1060px" width="230" height="20" viewBox="0 0 230 20"><g fill="#8c8c8c"><rect x="5" y="4" width="2" height="13"/><path d="M16 4v13l-8-6.500z"/><path d="M34 4v13l-8-6.500z"/><path d="M182 4v13l8-6.500z"/><path d="M200 4v13l8-6.500z"/><rect x="209" y="4" width="2" height="13"/></g></svg>
<div class="abs" style="left:228px;top:1062px;width:2px;height:20px;background:#9b9b9b;border-right:1px solid #fff"></div>
<div class="abs" style="left:251px;top:1062px;width:2px;height:20px;background:#9b9b9b;border-right:1px solid #fff"></div>
<div class="abs" style="left:403px;top:1062px;width:2px;height:20px;background:#9b9b9b;border-right:1px solid #fff"></div>
<div class="abs" style="left:424px;top:1062px;width:2px;height:20px;background:#9b9b9b;border-right:1px solid #fff"></div>
<div class="t" style="left:255.00px;top:1066px;font-size:11.5px;color:#222;letter-spacing:-0.537px;">Board</div>
<div class="abs" style="left:286px;top:1061px;width:96px;height:24px;background:#fff;border:2px solid #7a7a7a;border-right:2px solid #8a8a8a"></div>
<div class="t" style="left:289.50px;top:1066px;font-size:11.5px;color:#222;letter-spacing:-0.688px;">MAIN</div>
<svg class="abs" style="left:366px;top:1064px" width="14" height="14" viewBox="0 0 14 14"><path d="M3 5.500h8l-4 4z" fill="#111"/></svg>
<div class="t" style="left:457.00px;top:1066px;font-size:11.5px;color:#222;letter-spacing:-0.462px;">1 of 1</div>
<svg class="abs" style="left:513px;top:1061px" width="20" height="19" viewBox="0 0 20 19"><path d="M5 8l2.500-5h8l-2.500 5z" fill="#f4f4f4" stroke="#333" stroke-width="1"/><path d="M1.500 11l3-3h11l3 3v5h-17z" fill="#bdbdbd" stroke="#222" stroke-width="1.200"/><rect x="1.500" y="11" width="17" height="2" fill="#333"/><path d="M2 17h16.500" stroke="#222" stroke-width="1.600"/></svg>
<div class="abs" style="left:532px;top:1062px;width:2px;height:20px;background:#9b9b9b;border-right:1px solid #fff"></div>
<svg class="abs" style="left:535px;top:1061px" width="20" height="19" viewBox="0 0 20 19"><path d="M2 9l4-4v8z" fill="#ddd" stroke="#888" stroke-width=".8"/><path d="M6 3.500h6l4 3v11h-10z" fill="#c060b0" stroke="#402040" stroke-width="1"/><path d="M9 5.500h4l3 2.500v9h-7z" fill="#e8c0e0" stroke="#402040" stroke-width="1"/></svg>
<div class="abs" style="left:553px;top:1062px;width:2px;height:20px;background:#9b9b9b;border-right:1px solid #fff"></div>
<svg class="abs" style="left:583px;top:1059px" width="22" height="21" viewBox="0 0 22 21"><rect x="6" y="6" width="12.500" height="13.500" fill="#2038b0" stroke="#101860" stroke-width="1"/><text x="12.300" y="17" font-size="10" font-weight="bold" fill="#fff" text-anchor="middle" font-family="Liberation Sans">W</text><path d="M3 2.500l6 6M9 2.500l-6 6M6 1.500v8M2 5.500h8" stroke="#20a030" stroke-width="1.600"/></svg>
<div class="abs" style="left:602px;top:1062px;width:2px;height:20px;background:#9b9b9b;border-right:1px solid #fff"></div>
<div class="abs" style="left:617px;top:1062px;width:2px;height:20px;background:#9b9b9b;border-right:1px solid #fff"></div>
<svg class="abs" style="left:605px;top:1064px" width="12" height="14" viewBox="0 0 12 14"><path d="M2 5.500h8l-4 4z" fill="#111"/></svg>
<div class="abs" style="left:647px;top:1061px;width:73px;height:24px;background:#fff;border:2px solid #7a7a7a"></div>
<div class="t" style="left:650.00px;top:1066px;font-size:11.5px;color:#222;letter-spacing:-0.590px;">Page width</div>
<svg class="abs" style="left:704px;top:1064px" width="14" height="14" viewBox="0 0 14 14"><path d="M3 5.500h8l-4 4z" fill="#111"/></svg>
<div class="abs" style="left:776px;top:1059px;width:38px;height:24px;background:#f9f9f9;border-right:2px solid #9a9a9a"></div>
<div class="t" style="left:787.00px;top:1067px;font-size:11.5px;color:#222;">E<u>x</u>it</div>
<div class="abs" style="left:855px;top:677px;width:652px;height:421px;border:1px solid #4c4c4c;border-radius:7px 7px 0 0;background:linear-gradient(180deg,#f2f2f2 0,#e3e3e3 28px,#ebebeb 29px);box-shadow:inset 0 0 0 1px #fbfbfb"></div>
<div class="abs" style="left:858px;top:679px;width:646px;height:27px;background:linear-gradient(90deg,#f0f0f0 0,#ececec 35%,#dadada 62%,#e6e6e6 80%,#ececec 100%);border-radius:5px 5px 0 0"></div>
<div class="wc" style="left:1397px;top:678px;width:104px;height:19px"><div class="b" style="left:0;width:28px"><svg viewBox="0 0 28 18"><rect x="8.5" y="9.44" width="11" height="4" rx="1" fill="#fff" stroke="#4c5260" stroke-width="1.2"/></svg></div><div class="b" style="left:28px;width:27px"><svg viewBox="0 0 27 18"><rect x="8.0" y="3.6" width="10" height="9" rx="1" fill="#f6f6f6" stroke="#4c5260" stroke-width="1.3"/><rect x="10.5" y="6.6" width="5" height="3" fill="#fff" stroke="#4c5260" stroke-width="1"/></svg></div><div class="c" style="left:55px;width:48px"><svg viewBox="0 0 48 18"><path d="M19.9 5.8L27.1 12.2M27.1 5.8L19.9 12.2" stroke="#5a2218" stroke-width="4" stroke-linecap="round" opacity=".5"/><path d="M19.9 5.8L27.1 12.2M27.1 5.8L19.9 12.2" stroke="#fff" stroke-width="2.4" stroke-linecap="square"/></svg></div></div>
<svg class="abs" style="left:862px;top:684px" width="17" height="16" viewBox="0 0 17 16"><rect x=".5" y=".5" width="16" height="15" fill="#141414"/><path d="M13 1l-8.500 7.300h4.300l-5.300 6.700 10-8.300h-4.500z" fill="#e62626" stroke="#f05a5a" stroke-width=".6"/></svg>
<div class="t" style="left:884.30px;top:686px;font-size:12px;color:#1c1c1c;letter-spacing:0.038px;">Protective device overlay utility</div>
<div class="t" style="left:1056.50px;top:686px;font-size:12px;color:#1c1c1c;">©</div>
<div class="t" style="left:1070.40px;top:686px;font-size:12px;color:#1c1c1c;letter-spacing:-0.107px;">Hevacomp</div>
<div class="abs" style="left:862px;top:706px;width:638px;height:381px;background:#efefef;border-left:3px solid #7b7b7b;border-top:4px solid #7b7b7b;border-right:3px solid #7b7b7b"></div>
<div class="abs" style="left:866px;top:710px;width:125px;height:19px;background:#f3f3f3;border:1px solid #8a8a8a;border-top-color:#c4c4c4;border-left-color:#dcdcdc;border-right-width:1.500px;border-radius:3px 3px 0 0"></div><div class="t" style="left:900.00px;top:714px;font-size:12px;color:#2a2a2a;letter-spacing:-0.542px;">Device data</div>
<div class="abs" style="left:992px;top:710px;width:126px;height:19px;background:#f3f3f3;border:1px solid #8a8a8a;border-top-color:#c4c4c4;border-left-color:#dcdcdc;border-right-width:1.500px;border-radius:3px 3px 0 0"></div><div class="t" style="left:1022.75px;top:714px;font-size:12px;color:#2a2a2a;letter-spacing:-0.643px;">Overload fault</div>
<div class="abs" style="left:1119px;top:710px;width:126px;height:19px;background:#f3f3f3;border:1px solid #8a8a8a;border-top-color:#c4c4c4;border-left-color:#dcdcdc;border-right-width:1.500px;border-radius:3px 3px 0 0"></div><div class="t" style="left:1158.00px;top:714px;font-size:12px;color:#2a2a2a;letter-spacing:-0.518px;">Earth fault</div>
<div class="abs" style="left:1246px;top:710px;width:127px;height:19px;background:#f3f3f3;border:1px solid #8a8a8a;border-top-color:#c4c4c4;border-left-color:#dcdcdc;border-right-width:1.500px;border-radius:3px 3px 0 0"></div><div class="t" style="left:0.00px;top:714px;font-size:12px;color:#2a2a2a;"></div>
<div class="t" style="left:1291.30px;top:714px;font-size:12px;color:#2a2a2a;">I</div><div class="t" style="left:1294.60px;top:714px;font-size:7.5px;color:#2a2a2a;">2</div><div class="t" style="left:1298.40px;top:714px;font-size:12px;color:#2a2a2a;letter-spacing:-0.722px;">t graph</div>
<div class="abs" style="left:1374px;top:710px;width:123px;height:20px;background:#efefef"></div><div class="t" style="left:1398.65px;top:714px;font-size:12px;color:#111;font-weight:bold;letter-spacing:-0.332px;">Discrimination</div>
<div class="abs" style="left:866px;top:728px;width:508px;height:1.500px;background:#8e8e8e"></div>
<div class="abs" style="left:885px;top:746px;width:593.3px;height:177px;border:1px solid #c6c6c6;box-shadow:1px 1px 0 #fbfbfb, inset 1px 1px 0 #fbfbfb"></div><div class="abs" style="left:890px;top:740px;width:125px;height:12px;background:#efefef"></div><div class="t" style="left:894.00px;top:742px;font-size:11.5px;color:#111;font-weight:bold;letter-spacing:0.066px;">Discrimination check</div>
<div class="t" style="left:895.00px;top:784px;font-size:11.5px;color:#17177f;font-weight:bold;letter-spacing:0.188px;">0)</div>
<div class="t" style="left:913.90px;top:784px;font-size:11.5px;color:#17177f;font-weight:bold;letter-spacing:-0.019px;">Supply point</div>
<div class="t" style="left:1008.70px;top:784px;font-size:11.5px;color:#17177f;letter-spacing:-0.605px;">Upstream</div>
<svg class="abs" style="left:1061px;top:779px" width="16" height="18" viewBox="0 0 16 18"><path d="M7.500 2v12M2 9l5.500 5.500 5.500-5.500" fill="none" stroke="#17177f" stroke-width="1.700"/></svg>
<div class="t" style="left:895.00px;top:808px;font-size:11.5px;color:#111;font-weight:bold;">1)</div>
<div class="t" style="left:914.80px;top:808px;font-size:11.5px;color:#111;font-weight:bold;letter-spacing:0.126px;">Supply S1 :</div>
<div class="t" style="left:988.00px;top:808px;font-size:11.5px;color:#111;font-weight:bold;letter-spacing:0.244px;">400 A Adjust</div>
<div class="t" style="left:895.00px;top:826px;font-size:11.5px;color:#111;font-weight:bold;">2)</div>
<div class="t" style="left:914.80px;top:826px;font-size:11.5px;color:#111;font-weight:bold;letter-spacing:0.339px;">MAIN way 1 :</div>
<div class="t" style="left:999.00px;top:826px;font-size:11.5px;color:#111;font-weight:bold;letter-spacing:0.491px;">160 A BS88</div>
<div class="t" style="left:1104.60px;top:772px;font-size:11.5px;color:#17177f;letter-spacing:-0.385px;">Set earth</div>
<div class="t" style="left:1104.60px;top:785px;font-size:11.5px;color:#17177f;letter-spacing:-0.269px;">leakage</div>
<div class="abs" style="left:1098px;top:806px;width:53px;height:16.5px;background:#fff;border:1.500px solid #7f7f7f;box-shadow:1px 1px 0 #fff"></div>
<div class="t" style="left:1102.20px;top:810px;font-size:11.5px;color:#222;letter-spacing:-0.444px;">Adjust</div>
<div class="abs" style="left:1098px;top:824px;width:53px;height:16.5px;background:#fff;border:1.500px solid #7f7f7f;box-shadow:1px 1px 0 #fff"></div>
<div class="t" style="left:1102.60px;top:828px;font-size:11.5px;color:#222;letter-spacing:-0.609px;">Use RCD</div>
<div class="t" style="left:1202.35px;top:756px;font-size:11.5px;color:#17177f;font-weight:bold;letter-spacing:0.222px;">Earth fault</div>
<div class="t" style="left:1190.40px;top:772px;font-size:11.5px;color:#17177f;letter-spacing:-0.592px;">Current</div>
<div class="t" style="left:1193.70px;top:785px;font-size:11.5px;color:#17177f;letter-spacing:-0.809px;">(Amps)</div>
<div class="t" style="left:1237.60px;top:772px;font-size:11.5px;color:#17177f;letter-spacing:-0.569px;">Discrim-</div>
<div class="t" style="left:1241.90px;top:785px;font-size:11.5px;color:#17177f;letter-spacing:-0.426px;">ination</div>
<div class="t" style="left:1318.85px;top:756px;font-size:11.5px;color:#17177f;font-weight:bold;letter-spacing:0.044px;">Short circuit</div>
<div class="t" style="left:1310.40px;top:772px;font-size:11.5px;color:#17177f;letter-spacing:-0.592px;">Current</div>
<div class="t" style="left:1313.50px;top:785px;font-size:11.5px;color:#17177f;letter-spacing:-0.809px;">(Amps)</div>
<div class="t" style="left:1356.70px;top:772px;font-size:11.5px;color:#17177f;letter-spacing:-0.569px;">Discrim-</div>
<div class="t" style="left:1360.70px;top:785px;font-size:11.5px;color:#17177f;letter-spacing:-0.426px;">ination</div>
<div class="t" style="left:1418.50px;top:756px;font-size:11.5px;color:#17177f;font-weight:bold;letter-spacing:0.099px;">Breaking</div>
<div class="t" style="left:1419.00px;top:769px;font-size:11.5px;color:#17177f;font-weight:bold;letter-spacing:0.160px;">capacity</div>
<div class="abs" style="left:1192.2px;top:804.3px;width:35.799999999999955px;height:17.0px;background:#fff;border-top:2px solid #7a7a7a;border-left:2px solid #7a7a7a;border-right:1px solid #e2e2e2;border-bottom:1px solid #e2e2e2"></div>
<div class="abs" style="left:1192.2px;top:823.3px;width:35.799999999999955px;height:16.5px;background:#fff;border-top:2px solid #7a7a7a;border-left:2px solid #7a7a7a;border-right:1px solid #e2e2e2;border-bottom:1px solid #e2e2e2"></div>
<div class="abs" style="left:1312.2px;top:804.3px;width:35.799999999999955px;height:17.0px;background:#fff;border-top:2px solid #7a7a7a;border-left:2px solid #7a7a7a;border-right:1px solid #e2e2e2;border-bottom:1px solid #e2e2e2"></div>
<div class="abs" style="left:1312.2px;top:823.3px;width:35.799999999999955px;height:16.5px;background:#fff;border-top:2px solid #7a7a7a;border-left:2px solid #7a7a7a;border-right:1px solid #e2e2e2;border-bottom:1px solid #e2e2e2"></div>
<div class="t" style="left:1196.90px;top:809px;font-size:11.5px;color:#222;letter-spacing:-0.475px;">46000</div>
<div class="t" style="left:1202.90px;top:827px;font-size:11.5px;color:#222;letter-spacing:-0.495px;">4476</div>
<div class="t" style="left:1317.30px;top:809px;font-size:11.5px;color:#222;letter-spacing:-0.475px;">45770</div>
<div class="t" style="left:1317.30px;top:827px;font-size:11.5px;color:#222;letter-spacing:-0.475px;">25536</div>
<svg class="abs" style="left:1247px;top:823px" width="16" height="16" viewBox="0 0 16 16"><path d="M2 9.500l4 4.500 8-12.500" fill="none" stroke="#18b818" stroke-width="2" stroke-linejoin="miter"/></svg>
<svg class="abs" style="left:1366.6px;top:823px" width="16" height="16" viewBox="0 0 16 16"><path d="M2 9.500l4 4.500 8-12.500" fill="none" stroke="#18b818" stroke-width="2" stroke-linejoin="miter"/></svg>
<svg class="abs" style="left:1432.4px;top:805.5px" width="16" height="16" viewBox="0 0 16 16"><path d="M2 9.500l4 4.500 8-12.500" fill="none" stroke="#18b818" stroke-width="2" stroke-linejoin="miter"/></svg>
<svg class="abs" style="left:1432.4px;top:823px" width="16" height="16" viewBox="0 0 16 16"><path d="M2 9.500l4 4.500 8-12.500" fill="none" stroke="#18b818" stroke-width="2" stroke-linejoin="miter"/></svg>
<div class="abs" style="left:1004.600px;top:946px;width:158px;height:22.500px;background:#f0f0f0;border-top:1.500px solid #fff;border-left:1.500px solid #fff;border-right:2px solid #6e6e6e;border-bottom:2px solid #6e6e6e;box-shadow:-1px -1px 0 #8a8a8a"></div>
<div class="t" style="left:1011.70px;top:952px;font-size:11.5px;color:#111;font-weight:bold;letter-spacing:0.126px;">Estimate all fault currents</div>
<div class="abs" style="left:1202.700px;top:946px;width:158.500px;height:22.500px;background:#f0f0f0;border-top:2px solid #5a5a5a;border-left:2px solid #5a5a5a;border-right:2.500px solid #4e4e4e;border-bottom:2.500px solid #4e4e4e;box-shadow:inset 1px 1px 0 #fff"></div>
<div class="abs" style="left:1212px;top:950.500px;width:140px;height:14px;border:1px dotted #c04040"></div>
<div class="t" style="left:1214.00px;top:952px;font-size:11.5px;color:#b81c1c;font-weight:bold;letter-spacing:0.075px;">Calculate Discrimination</div>
<div class="abs" style="left:951.7px;top:1038.8px;width:162.70000000000005px;height:61.200000000000045px;border:1px solid #c6c6c6;box-shadow:1px 1px 0 #fbfbfb, inset 1px 1px 0 #fbfbfb"></div><div class="abs" style="left:956.8px;top:1032.8px;width:153px;height:12px;background:#efefef"></div><div class="t" style="left:960.80px;top:1034px;font-size:11.5px;color:#111;font-weight:bold;letter-spacing:0.072px;">Earth Fault Discrimination</div>
<div class="abs" style="left:1268.8px;top:1038.8px;width:171.20000000000005px;height:61.200000000000045px;border:1px solid #c6c6c6;box-shadow:1px 1px 0 #fbfbfb, inset 1px 1px 0 #fbfbfb"></div><div class="abs" style="left:1273.5px;top:1032.8px;width:161px;height:12px;background:#efefef"></div><div class="t" style="left:1277.50px;top:1034px;font-size:11.5px;color:#111;font-weight:bold;letter-spacing:0.011px;">Short Circuit Discrimination</div>
<div class="t" style="left:960.80px;top:1054px;font-size:11.5px;color:#222;letter-spacing:-0.394px;">Fault at 2</div>
<div class="t" style="left:1277.50px;top:1054px;font-size:11.5px;color:#222;letter-spacing:-0.394px;">Fault at 2</div>
<svg class="abs" style="left:1018.6px;top:1050px" width="64" height="18" viewBox="0 0 64 18" font-family="Liberation Sans"><path d="M0 9h62" stroke="#333" stroke-width="1.200"/><rect x="8" y="1.200" width="18.800" height="15.600" fill="#16e416" stroke="#1a8a1a" stroke-width="1.200"/><rect x="34.700" y="1.200" width="18.800" height="15.600" fill="#fbfbfb" stroke="#333" stroke-width="1.200"/><text x="17.400" y="13.300" font-size="12" font-weight="bold" text-anchor="middle" fill="#0a4a0a">1</text><text x="44.100" y="13.300" font-size="12" font-weight="bold" text-anchor="middle" fill="#222">2</text></svg>
<svg class="abs" style="left:1334.9px;top:1050px" width="64" height="18" viewBox="0 0 64 18" font-family="Liberation Sans"><path d="M0 9h62" stroke="#333" stroke-width="1.200"/><rect x="8" y="1.200" width="18.800" height="15.600" fill="#16e416" stroke="#1a8a1a" stroke-width="1.200"/><rect x="34.700" y="1.200" width="18.800" height="15.600" fill="#fbfbfb" stroke="#333" stroke-width="1.200"/><text x="17.400" y="13.300" font-size="12" font-weight="bold" text-anchor="middle" fill="#0a4a0a">1</text><text x="44.100" y="13.300" font-size="12" font-weight="bold" text-anchor="middle" fill="#222">2</text></svg>
<div class="abs" style="left:904.4px;top:409px;width:312.1px;height:53.5px;background:#3f3f3f"></div>
<div class="t" style="left:930.00px;top:418px;font-size:30px;color:#fff;letter-spacing:0.205px;">Cable sizing report</div>
<div class="abs" style="left:1178px;top:531px;width:231px;height:90.70000000000005px;background:#3f3f3f"></div>
<div class="t" style="left:1204.40px;top:540px;font-size:30px;color:#fff;letter-spacing:0.130px;">Discretion test</div>
<div class="t" style="left:1204.40px;top:578px;font-size:30px;color:#fff;letter-spacing:-0.051px;">results</div>
<div class="abs" style="left:1633px;top:353px;width:231px;height:49.80000000000001px;background:#3f3f3f"></div>
<div class="t" style="left:1658.50px;top:363px;font-size:30px;color:#fff;letter-spacing:0.055px;">Circuit design</div>
<svg class="abs" style="left:0;top:0" width="1920" height="1080" viewBox="0 0 1920 1080"><g fill="#000"><circle cx="701.2" cy="336.3" r="13"/><circle cx="728.5" cy="336.3" r="4.9"/><circle cx="748.5" cy="336.3" r="4.9"/><circle cx="768.5" cy="336.3" r="4.9"/><circle cx="788.5" cy="336.3" r="4.9"/><circle cx="808.5" cy="336.3" r="4.9"/><circle cx="828.5" cy="336.3" r="4.9"/><circle cx="848.5" cy="336.3" r="4.9"/><circle cx="868.5" cy="336.3" r="4.9"/><circle cx="888.5" cy="336.3" r="4.9"/><circle cx="908.5" cy="336.3" r="4.9"/><circle cx="928.5" cy="336.3" r="4.9"/><circle cx="948.5" cy="336.3" r="4.9"/><circle cx="963.5" cy="341.1" r="4.9"/><circle cx="963.5" cy="361.2" r="4.9"/><circle cx="963.5" cy="381.3" r="4.9"/><circle cx="963.5" cy="401.2" r="4.9"/><circle cx="1664" cy="236.3" r="13.2"/><circle cx="1664" cy="266.4" r="5.1"/><circle cx="1664" cy="286" r="5.1"/><circle cx="1664" cy="306" r="5.1"/><circle cx="1664" cy="325.8" r="5.1"/><circle cx="1664" cy="345.9" r="5.1"/><circle cx="1107" cy="568.8" r="4.9"/><circle cx="1127.3" cy="568.8" r="4.9"/><circle cx="1147.3" cy="568.8" r="4.9"/><circle cx="1167.2" cy="568.8" r="4.9"/><circle cx="1102.3" cy="584" r="4.9"/><circle cx="1102.3" cy="603.7" r="4.9"/><circle cx="1102.3" cy="623.5" r="4.9"/><circle cx="1102.3" cy="643.4" r="4.9"/><circle cx="1102.3" cy="663.4" r="4.9"/><circle cx="1102.3" cy="683.3" r="4.9"/><circle cx="1102.3" cy="703.5" r="4.9"/><circle cx="1102.3" cy="723.7" r="4.9"/><circle cx="1102.2" cy="752.4" r="13.3"/><circle cx="1421" cy="804.3" r="13.5"/><circle cx="1450.6" cy="804.3" r="4.9"/><circle cx="1470.6" cy="804.3" r="4.9"/><circle cx="1490.7" cy="804.3" r="4.9"/><circle cx="1510.7" cy="804.3" r="4.9"/><circle cx="1530.7" cy="804.3" r="4.9"/></g></svg>
</div>
</body>
</html>
